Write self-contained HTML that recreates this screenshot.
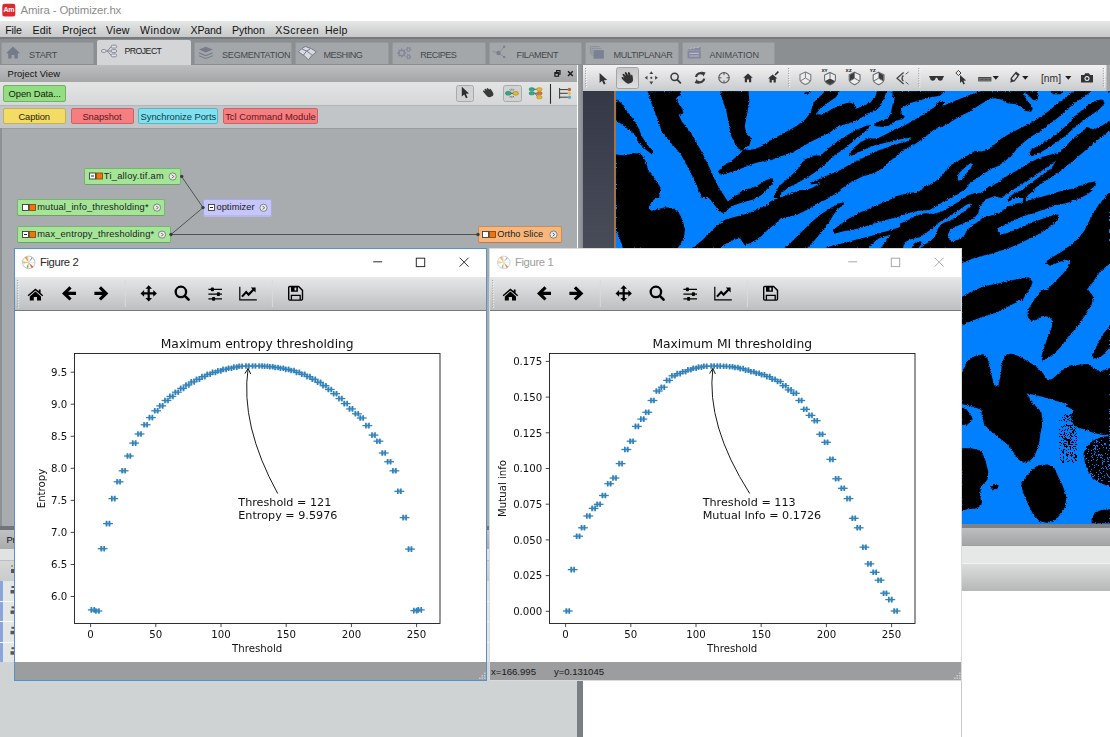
<!DOCTYPE html>
<html lang="en">
<head>
<meta charset="utf-8">
<title>Amira - Optimizer.hx</title>
<style>
html,body{margin:0;padding:0;background:#fff;}
body{width:1110px;height:737px;overflow:hidden;position:relative;font-family:"Liberation Sans",sans-serif;font-size:10px;color:#000;}
.a{position:absolute;}
.t{position:absolute;white-space:pre;line-height:1;}
#titlebar{left:0;top:0;width:1110px;height:21px;background:#fff;}
#menubar{left:0;top:21px;width:1110px;height:15.5px;background:linear-gradient(#e6e7e7,#c6c8c9);}
#menubar span{position:absolute;top:3.7px;line-height:1;white-space:pre;color:#111;}
#tabbar{left:0;top:36.5px;width:1110px;height:28.5px;background:#8c8f92;border-top:2px solid #787b7e;box-sizing:border-box;}
.tab{position:absolute;top:42px;height:22px;background:#a4a7a9;border-radius:2px 2px 0 0;border:1px solid #96999c;border-bottom:none;box-sizing:border-box;}
.tab.on{top:40px;height:25px;background:#d3d5d6;border:none;}
.tab span{position:absolute;top:7.8px;line-height:1;color:#45484b;white-space:pre;}
.tab.on span{top:7.3px;color:#1a1a1a;}
/* project view */
#pvhead{left:0;top:65px;width:577px;height:17px;background:linear-gradient(#bcbec0,#a3a5a7);}
#pvtool{left:0;top:82px;width:577px;height:23px;background:linear-gradient(#e3e4e4,#d6d7d8);}
#pvbtn{left:0;top:105px;width:577px;height:23px;background:#c2c5c7;border-top:1px solid #b2b4b5;box-sizing:border-box;}
#pvcanvas{left:0;top:128px;width:577px;height:398px;background:#a9acae;border-top:1px solid #9a9d9f;box-sizing:border-box;}
.btn{position:absolute;border-radius:2px;box-sizing:border-box;}
.node{position:absolute;height:15px;border-radius:2px;box-sizing:border-box;font-size:9.5px;line-height:13px;white-space:pre;}
.nt{font-size:9.6px;color:#1c1c1c;}
#split{left:577.5px;top:65px;width:5.5px;height:672px;background:linear-gradient(90deg,#9fa2a4,#888b8e);}
/* viewer */
#vtool{left:583px;top:65px;width:527px;height:26px;background:linear-gradient(#f2f2f2,#c9cbcc);}
#vgut{left:583px;top:91px;width:32px;height:433px;background:linear-gradient(#353847,#6a6d76);}
#vimg{left:615px;top:91px;width:495px;height:433px;background:#0080ff;overflow:hidden;}
/* figure windows */
.fig{position:absolute;box-sizing:border-box;width:474px;height:433px;background:#fff;}
.fig .tb{position:absolute;left:0;top:28px;width:100%;height:34px;background:linear-gradient(#e6e7e8,#bdbfc0);border-bottom:1px solid #77797b;box-sizing:border-box;}
.fig .sb{position:absolute;left:0;top:413px;width:100%;height:18px;background:#9b9d9e;}
.fig .ttl{position:absolute;left:24.9px;top:7.8px;line-height:1;white-space:pre;}
.mk .v{stroke-width:1.6px;}
.mk .f{stroke:none;fill:#1f77b4;opacity:.45;}
svg text{font-family:"DejaVu Sans","Liberation Sans",sans-serif;}
</style>
</head>
<body>
<!-- ===== title bar ===== -->
<div class="a" id="titlebar">
  <svg class="a" style="left:2px;top:3px" width="15" height="15" viewBox="0 0 15 15"><rect x="0.3" y="0.7" width="13" height="12.7" rx="2.2" fill="#e0272e"/><text x="6.8" y="9.4" font-size="7" letter-spacing="-0.4" font-weight="bold" fill="#fff" text-anchor="middle" style="font-family:'Liberation Sans',sans-serif">Am</text></svg>
  <span class="t" style="left:20.5px;top:5px;font-size:11.4px;letter-spacing:-0.124px;color:#8c8c8c;">Amira - Optimizer.hx</span>
</div>
<!-- ===== menu bar ===== -->
<div class="a" id="menubar">
  <span style="left:5.3px;font-size:10.6px;letter-spacing:-0.170px;">File</span><span style="left:32.4px;font-size:10.6px;letter-spacing:0.184px;">Edit</span><span style="left:62.2px;font-size:10.6px;letter-spacing:0.117px;">Project</span><span style="left:106px;font-size:10.6px;letter-spacing:0.230px;">View</span><span style="left:140px;font-size:10.6px;letter-spacing:0.469px;">Window</span><span style="left:190.5px;font-size:10.6px;letter-spacing:-0.142px;">XPand</span><span style="left:231.9px;font-size:10.6px;letter-spacing:0.003px;">Python</span><span style="left:275.3px;font-size:10.6px;letter-spacing:0.437px;">XScreen</span><span style="left:324.9px;font-size:10.6px;letter-spacing:0.226px;">Help</span>
</div>
<!-- ===== tab bar ===== -->
<div class="a" id="tabbar"></div>
<div class="tab" style="left:1px;width:93px"><span style="left:27.1px;font-size:9.1px;letter-spacing:-0.174px;">START</span></div>
<div class="tab on" style="left:97px;width:94px"><span style="left:27.6px;font-size:8.7px;letter-spacing:-0.535px;">PROJECT</span></div>
<div class="tab" style="left:194px;width:98px"><span style="left:27.0px;font-size:9.1px;letter-spacing:-0.251px;">SEGMENTATION</span></div>
<div class="tab" style="left:295px;width:94px"><span style="left:27.4px;font-size:9.1px;letter-spacing:-0.493px;">MESHING</span></div>
<div class="tab" style="left:392px;width:94px"><span style="left:27.3px;font-size:9.1px;letter-spacing:-0.548px;">RECIPES</span></div>
<div class="tab" style="left:489px;width:93px"><span style="left:26.6px;font-size:9.1px;letter-spacing:-0.446px;">FILAMENT</span></div>
<div class="tab" style="left:585px;width:94px"><span style="left:27.5px;font-size:9.1px;letter-spacing:-0.373px;">MULTIPLANAR</span></div>
<div class="tab" style="left:682px;width:93px"><span style="left:26.5px;font-size:9.1px;letter-spacing:-0.040px;">ANIMATION</span></div>
<svg class="a" style="left:0;top:38px" width="1110" height="28" viewBox="0 38 1110 28">
<!-- START home -->
<path d="M13 46.6L6 53.2H8.2V58.6H11.6V55H14.4V58.6H17.8V53.2H20Z" fill="#74798b"/>
<!-- PROJECT graph -->
<g fill="#e3e4e8" stroke="#7e828e" stroke-width="0.9"><rect x="101.5" y="49.6" width="4.6" height="2.8" rx="1.3"/><rect x="111.2" y="45.2" width="5.4" height="2.8" rx="1.3"/><rect x="111.2" y="49.6" width="5.4" height="2.8" rx="1.3"/><rect x="111.2" y="54" width="5.4" height="2.8" rx="1.3"/></g>
<path d="M106.2 51H111M107.3 51L111 46.8M107.3 51L111 55.3" fill="none" stroke="#7e828e" stroke-width="0.9"/>
<!-- SEGMENTATION layers -->
<path d="M205.8 46.8L212.8 49.6L205.8 52.4L198.8 49.6Z" fill="#777b8c"/>
<path d="M198.8 52.2L205.8 55L212.8 52.2L212.8 53.4L205.8 56.2L198.8 53.4Z" fill="#777b8c"/>
<path d="M198.8 55.2L205.8 58L212.8 55.2L212.8 56.2L205.8 59L198.8 56.2Z" fill="#777b8c"/>
<!-- MESHING -->
<path d="M298.4 51.9Q301.5 48 305.3 46.5Q311.5 47.8 316.4 51.9Q311.5 55.2 308.4 59.8Q304.5 55.2 298.4 51.9Z" fill="#d9dbe1" stroke="#767a8a" stroke-width="1"/>
<path d="M301.6 48.9Q307 50.2 312.6 55.6M310.6 48.6Q305.6 51 303.4 55.2" fill="none" stroke="#767a8a" stroke-width="1"/>
<!-- RECIPES gears -->
<path d="M406.28 52.55 L406.28 53.45 L405.05 54.02 L404.79 54.65 L405.26 55.92 L404.62 56.56 L403.35 56.09 L402.72 56.35 L402.15 57.58 L401.25 57.58 L400.68 56.35 L400.05 56.09 L398.78 56.56 L398.14 55.92 L398.61 54.65 L398.35 54.02 L397.12 53.45 L397.12 52.55 L398.35 51.98 L398.61 51.35 L398.14 50.08 L398.78 49.44 L400.05 49.91 L400.68 49.65 L401.25 48.42 L402.15 48.42 L402.72 49.65 L403.35 49.91 L404.62 49.44 L405.26 50.08 L404.79 51.35 L405.05 51.98Z M403.60 53.00A1.9 1.9 0 1 0 399.80 53.00A1.9 1.9 0 1 0 403.60 53.00Z M411.38 49.03 L411.38 49.77 L410.45 50.17 L410.19 50.62 L410.30 51.62 L409.67 51.99 L408.86 51.38 L408.34 51.38 L407.53 51.99 L406.90 51.62 L407.01 50.62 L406.75 50.17 L405.82 49.77 L405.82 49.03 L406.75 48.63 L407.01 48.18 L406.90 47.18 L407.53 46.81 L408.34 47.42 L408.86 47.42 L409.67 46.81 L410.30 47.18 L410.19 48.18 L410.45 48.63Z M409.60 49.40A1.0 1.0 0 1 0 407.60 49.40A1.0 1.0 0 1 0 409.60 49.40Z M411.38 56.33 L411.38 57.07 L410.45 57.47 L410.19 57.92 L410.30 58.92 L409.67 59.29 L408.86 58.68 L408.34 58.68 L407.53 59.29 L406.90 58.92 L407.01 57.92 L406.75 57.47 L405.82 57.07 L405.82 56.33 L406.75 55.93 L407.01 55.48 L406.90 54.48 L407.53 54.11 L408.34 54.72 L408.86 54.72 L409.67 54.11 L410.30 54.48 L410.19 55.48 L410.45 55.93Z M409.60 56.70A1.0 1.0 0 1 0 407.60 56.70A1.0 1.0 0 1 0 409.60 56.70Z" fill="#848899" fill-rule="evenodd"/>
<!-- FILAMENT -->
<path d="M492.7 51.4L498.5 53L504.2 46.8M498.5 53L504.2 57" fill="none" stroke="#868a97" stroke-width="0.9"/>
<circle cx="498.5" cy="53" r="2.2" fill="#7b7f91"/><circle cx="504.2" cy="46.8" r="1.2" fill="#7b7f91"/><circle cx="504.2" cy="57" r="1.2" fill="#7b7f91"/>
<!-- MULTIPLANAR -->
<path d="M590.4 54V46.5H599.4M592 56V48.4H601.4" fill="none" stroke="#8a8e9a" stroke-width="0.9"/>
<rect x="593.5" y="50.1" width="10.3" height="8.6" fill="#7b8093"/>
<!-- ANIMATION clapper -->
<path d="M687.6 49.6L700.8 47.2V50.6H687.6Z" fill="#8387a0"/>
<path d="M690.2 49.2L691.8 47.6M693.6 48.6L695.2 47.2M697 48L698.6 46.6" stroke="#c4c6d0" stroke-width="1" fill="none"/>
<rect x="687.6" y="51" width="13.2" height="7.5" fill="#8387a0"/>
<path d="M689.4 53.4H699M689.4 56H699" stroke="#b9bcc8" stroke-width="1.1"/>
</svg>
<!-- ===== project view ===== -->
<div class="a" id="pvhead"><span class="t" style="left:7.6px;top:4.4px;font-size:9.4px;letter-spacing:0.039px;color:#111;">Project View</span></div>
<div class="a" id="pvtool"></div>
<div class="a" id="pvbtn"></div>
<div class="a" id="pvcanvas"></div>
<div class="a" style="left:0;top:128px;width:1.5px;height:398px;background:#8e9194;"></div>
<div class="btn" style="left:3.2px;top:85.1px;width:62.5px;height:17.1px;background:#93dd83;border:1px solid #72b066;color:#12210f;"><span class="t" style="left:4.4px;top:3.2px;font-size:9.4px;letter-spacing:-0.080px;">Open Data...</span></div>
<div class="btn" style="left:3.2px;top:108.4px;width:62.5px;height:16.0px;background:#f3dc66;border:1px solid #c2b05a;color:#2a2508;"><span class="t" style="left:14.2px;top:2.3px;font-size:9.4px;letter-spacing:-0.104px;">Caption</span></div>
<div class="btn" style="left:70.8px;top:108.4px;width:63.0px;height:16.0px;background:#f67d80;border:1px solid #c4676a;color:#5c1719;"><span class="t" style="left:10.6px;top:2.3px;font-size:9.4px;letter-spacing:-0.053px;">Snapshot</span></div>
<div class="btn" style="left:137.8px;top:108.4px;width:80.0px;height:16.0px;background:#80e1f0;border:1px solid #62b3c2;color:#0d3c46;"><span class="t" style="left:1.7px;top:2.3px;font-size:9.4px;letter-spacing:-0.022px;">Synchronize Ports</span></div>
<div class="btn" style="left:222.6px;top:108.4px;width:95.2px;height:16.0px;background:#f67d80;border:1px solid #c4676a;color:#5c1719;"><span class="t" style="left:1.6px;top:2.3px;font-size:9.4px;letter-spacing:-0.004px;">Tcl Command Module</span></div>
<div class="a" style="left:456px;top:84.8px;width:18px;height:17.6px;background:#d1d2d3;border:1px solid #a8aaac;border-radius:2.5px;box-sizing:border-box;"></div>
<div class="a" style="left:503px;top:84.8px;width:18.6px;height:17.6px;background:#d1d2d3;border:1px solid #a8aaac;border-radius:2.5px;box-sizing:border-box;"></div>
<svg class="a" style="left:450px;top:64px" width="128" height="44" viewBox="450 64 128 44">
<!-- float / close -->
<g fill="none" stroke="#1c1c1c" stroke-width="1.2"><path d="M556.6 71.9V70.6H560V74.2H558.6"/><rect x="554.9" y="72.6" width="3.6" height="3.6"/><path d="M554.9 73.1H558.5" stroke-width="1.6"/></g>
<path d="M568 71.2L572.8 76M572.8 71.2L568 76" stroke="#1c1c1c" stroke-width="1.5" fill="none"/>
<!-- arrow cursor -->
<path d="M461.8 86.8V96.6L464.2 94.4L466 98.2L467.6 97.4L465.9 93.8L469 93.6Z" fill="#2e2e2e"/>
<!-- hand -->
<path transform="rotate(-20 488.5 93)" d="M484 90.4Q483.4 89 484.6 88.9Q485.6 89 486.4 90.6L485.8 88.6Q486 87.6 487 88Q487.8 88.4 488.4 90L488.2 88.4Q488.6 87.6 489.5 88.2Q490.2 89 490.6 90.6L490.8 89.6Q491.6 89.2 492 90.2Q492.8 92.6 492.9 95Q492.8 96.6 491.4 97.2L488.2 97.4Q486.8 97 486 95.6Q485 93 484 90.4Z" fill="#3a3a3a"/>
<!-- link icon -->
<path d="M509 93.3H516" stroke="#444" stroke-width="1"/>
<rect x="505.6" y="91.6" width="5.4" height="3.4" rx="1.7" fill="#2fae86" stroke="#1f7d5f" stroke-width="0.7"/>
<rect x="513" y="91.6" width="5.4" height="3.4" rx="1.7" fill="#e2bd2c" stroke="#a88a1c" stroke-width="0.7"/>
<path d="M511.9 88.6V90.6M511.9 96V98M509.8 89.2L510.6 90.6M514 89.2L513.2 90.6M509.8 97.4L510.6 96M514 97.4L513.2 96" stroke="#555" stroke-width="0.7"/>
<!-- tree icon -->
<path d="M533 89.3H538M533 93.3H538M535 93.3L538 97.2" stroke="#555" stroke-width="0.9" fill="none"/>
<rect x="529.2" y="87.8" width="5.2" height="3" rx="1.5" fill="#2fae86" stroke="#1f7d5f" stroke-width="0.6"/>
<rect x="529.2" y="91.8" width="5.2" height="3" rx="1.5" fill="#2fae86" stroke="#1f7d5f" stroke-width="0.6"/>
<rect x="536.8" y="87.8" width="5.2" height="3" rx="1.5" fill="#e2bd2c" stroke="#a88a1c" stroke-width="0.6"/>
<rect x="536.8" y="91.8" width="5.2" height="3" rx="1.5" fill="#d9772b" stroke="#a0551c" stroke-width="0.6"/>
<rect x="536.8" y="95.8" width="5.2" height="3" rx="1.5" fill="#e2bd2c" stroke="#a88a1c" stroke-width="0.6"/>
<!-- separator -->
<path d="M550.5 83.9V103.8" stroke="#2a2a2a" stroke-width="1.1"/>
<!-- list icon -->
<path d="M559.6 88V98.6M559.6 89.6H568M559.6 93.3H568M559.6 97.2H568" stroke="#3a3a3a" stroke-width="1" fill="none"/>
<circle cx="569.4" cy="89.5" r="1.7" fill="#b9683a"/><circle cx="569.4" cy="93.3" r="1.7" fill="#d9c262"/><circle cx="569.4" cy="97.2" r="1.7" fill="#6aa2c4"/>
</svg>

<svg class="a" style="left:0;top:128px" width="577" height="398" viewBox="0 128 577 398">
<g stroke="#505356" stroke-width="1" fill="none"><path d="M181.5 176.4L203 207.6M171 234.5L203 207.6M171 234.5H478"/></g>
</svg>
<div class="node" style="left:84px;top:168px;width:97px;height:17px;background:#a5e598;border:1px solid #79b36f;border-bottom-color:#6aa361;"><span class="t nt" style="left:18.8px;top:3.1px;font-size:9.3px;letter-spacing:0.253px;">Ti_alloy.tif.am</span></div>
<div class="node" style="left:17px;top:199px;width:148px;height:17px;background:#a5e598;border:1px solid #79b36f;border-bottom-color:#6aa361;"><span class="t nt" style="left:19.2px;top:3.1px;font-size:9.3px;letter-spacing:0.159px;">mutual_info_thresholding*</span></div>
<div class="node" style="left:17px;top:226px;width:154px;height:17px;background:#a5e598;border:1px solid #79b36f;border-bottom-color:#6aa361;"><span class="t nt" style="left:19.2px;top:3.1px;font-size:9.3px;letter-spacing:0.156px;">max_entropy_thresholding*</span></div>
<div class="node" style="left:203px;top:199px;width:69px;height:18px;background:#c6c6fb;border:1px solid #a9a9e0;border-bottom:2px solid #b8b8ee;"><span class="t nt" style="left:12.4px;top:3.1px;font-size:9.3px;letter-spacing:0.065px;">optimizer</span></div>
<div class="node" style="left:478px;top:226px;width:84px;height:17px;background:#f7b77c;border:1px solid #c98d55;border-bottom-color:#b57d49;"><span class="t nt" style="left:18.3px;top:3.1px;font-size:9.3px;letter-spacing:-0.009px;">Ortho Slice</span></div>
<svg class="a" style="left:0;top:160px" width="577" height="90" viewBox="0 160 577 90">
<g fill="#fff" stroke="#3c3c3c" stroke-width="0.9">
<rect x="89.5" y="173" width="6" height="6"/><rect x="22.5" y="204.5" width="6" height="6"/><rect x="22.5" y="231.5" width="6" height="6"/><rect x="208.5" y="204.5" width="6" height="6"/><rect x="482.5" y="231.5" width="6" height="6"/>
</g>
<g fill="#ee7411" stroke="#8a4a12" stroke-width="0.9">
<rect x="96.5" y="173" width="6" height="6"/><rect x="29.5" y="204.5" width="6" height="6"/><rect x="29.5" y="231.5" width="6" height="6"/><rect x="489.5" y="231.5" width="6" height="6"/>
</g>
<g stroke="#222" stroke-width="1"><path d="M91 176h3M24 234.5h3M210 207.5h3"/></g>
<g fill="#3a3d40"><circle cx="181.7" cy="176.4" r="1.7"/><circle cx="203" cy="207.6" r="1.7"/><circle cx="171" cy="234.5" r="1.7"/><circle cx="478" cy="234.5" r="1.7"/></g>
<g fill="#e9ece6" stroke="#6b6e6b" stroke-width="0.8">
<circle cx="172.7" cy="176.5" r="3.6"/><circle cx="157" cy="207.6" r="3.6"/><circle cx="162" cy="234.6" r="3.6"/><circle cx="263.5" cy="207.8" r="3.6"/><circle cx="553.5" cy="234.6" r="3.6"/>
</g>
<g fill="none" stroke="#444" stroke-width="0.9"><path d="M172 174.8l1.7 1.7l-1.7 1.7M156.3 205.9l1.7 1.7l-1.7 1.7M161.3 232.9l1.7 1.7l-1.7 1.7M262.8 206.1l1.7 1.7l-1.7 1.7M552.8 232.9l1.7 1.7l-1.7 1.7"/></g>
</svg>

<!-- ===== bottom-left (properties peek) ===== -->
<div class="a" style="left:0;top:526px;width:577px;height:3.5px;background:#727578;"></div>
<div class="a" style="left:0;top:529.5px;width:577px;height:19px;background:linear-gradient(#bfc1c3,#a9abad);"><span class="t" style="left:6.6px;top:5px;font-size:9.4px;letter-spacing:-0.3px;color:#111;">Properties</span></div>
<div class="a" style="left:0;top:548.5px;width:577px;height:11.5px;background:#e1e2e2;"></div>
<div class="a" style="left:0;top:560px;width:577px;height:21px;background:linear-gradient(#d5d7d7,#cacccc);border-top:1px solid #bcbebe;box-sizing:border-box;"></div>
<div class="a" style="left:0;top:581px;width:577px;height:81px;background:#e4e5e5;"></div>
<div class="a" style="left:0;top:581px;width:2.5px;height:81px;background:#8aa6da;"></div>
<div class="a" style="left:0;top:600.8px;width:577px;height:1px;background:#fafafa;"></div>
<div class="a" style="left:0;top:621.2px;width:577px;height:1px;background:#fafafa;"></div>
<div class="a" style="left:0;top:641.6px;width:577px;height:1px;background:#fafafa;"></div>
<div class="a" style="left:0;top:662px;width:577px;height:75px;background:#d0d3d4;"></div>
<svg class="a" style="left:8px;top:560px" width="8" height="100" viewBox="0 0 8 100"><g fill="#555"><rect x="3" y="5" width="2" height="2" fill="#b5a23a"/><rect x="3" y="9" width="3" height="4"/><rect x="3.5" y="26" width="2.5" height="2"/><rect x="2.5" y="30" width="3.5" height="3.5"/><rect x="3.5" y="46.4" width="2.5" height="2"/><rect x="2.5" y="50.4" width="3.5" height="3.5"/><rect x="3.5" y="66.8" width="2.5" height="2"/><rect x="2.5" y="70.8" width="3.5" height="3.5"/><rect x="3.5" y="87.2" width="2.5" height="2"/><rect x="2.5" y="91.2" width="3.5" height="3.5"/></g></svg>

<!-- ===== splitter ===== -->
<div class="a" id="split"></div>
<div class="a" style="left:577.3px;top:681px;width:5.3px;height:56px;background:#7b7e83;"></div>
<!-- ===== viewer ===== -->
<div class="a" id="vtool"></div>
<div class="a" style="left:616.4px;top:67.3px;width:22.2px;height:22px;background:linear-gradient(#c6c7c8,#dedede);border:1px solid #a2a4a6;border-radius:2.5px;box-sizing:border-box;"></div>
<svg class="a" style="left:583px;top:64px" width="527" height="28" viewBox="583 64 527 28">
<!-- grip dots -->
<g stroke-dasharray="1 1.5" stroke-width="1.2" fill="none"><path d="M585.6 68V88" stroke="#9a9c9e"/><path d="M586.6 68.8V88.8" stroke="#fff"/><path d="M788.6 68V88" stroke="#9a9c9e"/><path d="M789.6 68.8V88.8" stroke="#fff"/><path d="M918.8 68V88" stroke="#9a9c9e"/><path d="M919.8 68.8V88.8" stroke="#fff"/><path d="M1103.4 68V88" stroke="#9a9c9e"/><path d="M1104.4 68.8V88.8" stroke="#fff"/></g>
<rect x="1106.5" y="65" width="3.5" height="26" fill="#a3a5a7"/>
<!-- arrow -->
<path d="M599.6 73V83L602 80.8L603.8 84.6L605.6 83.8L603.9 80.2L607.2 80Z" fill="#333"/>
<!-- hand (tilted) -->
<g transform="rotate(-22 627 77.5)"><path d="M622 77Q621.2 75.4 622.4 75.2Q623.6 75.2 624.4 77L623.8 73.4Q624 72.2 625.2 72.6Q626 73 626.4 76L626.6 72.4Q627.2 71.4 628.2 72.2Q628.8 73 628.9 76.2L629.6 73.4Q630.4 72.6 631.2 73.6Q631.6 75 631.3 77.4L632 76.6Q633 76.4 632.8 77.8Q632.4 80.6 631.4 82.6Q630.6 83.8 629 84L626 83.8Q624.6 83.2 623.8 81.4Q622.8 79 622 77Z" fill="#333"/></g>
<!-- move -->
<g fill="#444"><path d="M651.3 71.2L653.3 74H649.3ZM651.3 84.4L653.3 81.6H649.3ZM644.7 77.8L647.5 75.8V79.8ZM657.9 77.8L655.1 75.8V79.8Z"/><circle cx="651.3" cy="77.8" r="1.1"/></g>
<!-- magnifier -->
<circle cx="674.6" cy="76.8" r="3.6" fill="none" stroke="#3a3a3a" stroke-width="1.5"/><path d="M677.2 79.6L680.4 82.8" stroke="#3a3a3a" stroke-width="1.8" stroke-linecap="round"/>
<!-- rotate -->
<g fill="none" stroke="#3a3a3a" stroke-width="2.2"><path d="M696 77A4.3 4.3 0 0 1 703 74.2"/><path d="M704.2 78.6A4.3 4.3 0 0 1 697.2 81.4"/></g>
<path d="M701.2 71.6L705.6 72.6L703.4 76.6ZM699 84L694.6 83L696.8 79Z" fill="#3a3a3a"/>
<!-- crosshair -->
<circle cx="724" cy="77.8" r="5.2" fill="none" stroke="#555" stroke-width="1.1"/><path d="M724 72.6V75.2M724 80.4V83M718.8 77.8H721.4M726.6 77.8H729.2" stroke="#555" stroke-width="1"/>
<!-- home -->
<path d="M748 73.4L743.2 77.8H744.8V82.2H747V79.4H749V82.2H751.2V77.8H752.8Z" fill="#333"/>
<!-- home2 -->
<path d="M772.6 74.4L768 78.6H769.6V82.6H771.8V80H773.6V82.6H775.8V78.6H777.4Z" fill="#333"/><path d="M775 75L778.4 71.6" stroke="#333" stroke-width="1.6"/>
<!-- cubes -->
<g transform="translate(805.4 78.2)"><path d="M0 -6.2L5.4 -3.6V1.6Q5 4 0 6.4Q-5 4 -5.4 1.6V-3.6Z" fill="#eceded" stroke="#7a7c7e" stroke-width="1.1"/><path d="M0 -6V-0.2M0 -0.2L-4.8 2.6M0 -0.2L4.8 2.6" stroke="#7a7c7e" stroke-width="1" fill="none"/></g>
<g transform="translate(830 78.6)"><path d="M0 -6.2L5.4 -3.6V1.6Q5 4 0 6.4Q-5 4 -5.4 1.6V-3.6Z" fill="#eceded" stroke="#6a6c6e" stroke-width="1.1"/><path d="M-4.8 2.4L0 -0.2L4.8 2.4Q4 4.4 0 6Q-4 4.4 -4.8 2.4Z" fill="#3c3c3c"/><path d="M0 -0.2V-5.6" stroke="#6a6c6e" stroke-width="1"/></g>
<g transform="translate(854.6 78.4)"><path d="M0 -6.2L5.4 -3.6V1.6Q5 4 0 6.4Q-5 4 -5.4 1.6V-3.6Z" fill="#eceded" stroke="#6a6c6e" stroke-width="1.1"/><path d="M-4.9 -3.4L0 -5.8V-0.2L-4.9 2.4Z" fill="#3c3c3c"/><path d="M0 -0.2L4.8 2.6M0 -0.2L-4.8 2.6" stroke="#6a6c6e" stroke-width="1" fill="none"/></g>
<g transform="translate(878.6 78.4)"><path d="M0 -6.2L5.4 -3.6V1.6Q5 4 0 6.4Q-5 4 -5.4 1.6V-3.6Z" fill="#eceded" stroke="#6a6c6e" stroke-width="1.1"/><path d="M4.9 -3.4L0 -5.8V-0.2L4.9 2.4Z" fill="#3c3c3c"/><path d="M0 -0.2L4.8 2.6M0 -0.2L-4.8 2.6" stroke="#6a6c6e" stroke-width="1" fill="none"/></g>
<g font-size="4.2" font-weight="bold" fill="#333" style="font-family:'Liberation Sans',sans-serif"><text x="821.4" y="72">XY</text><text x="845.6" y="72">XZ</text><text x="869.8" y="72">YZ</text></g>
<!-- eye / view all -->
<path d="M903.6 72.4L897 78.2L903.6 84" fill="none" stroke="#444" stroke-width="1.3"/><path d="M903.4 75.4Q900.6 78.2 903.4 81" fill="none" stroke="#444" stroke-width="1.4"/><path d="M905.6 74.2L908.6 72M905.6 82L908.6 84.4" stroke="#555" stroke-width="0.9"/>
<!-- glasses -->
<path d="M929.2 76H943.8V77.2L943 77.4Q942.8 80.6 940 80.8Q937.6 80.6 937.2 77.8H935.8Q935.4 80.6 933 80.8Q930.2 80.6 930 77.4L929.2 77.2Z" fill="#333"/>
<!-- pointer with diamond -->
<path d="M958.4 70.4L961 73L958.4 75.6L955.8 73Z" fill="none" stroke="#444" stroke-width="1"/><path d="M960 75V83L961.9 81.3L963.4 84.4L964.9 83.7L963.5 80.7L966.2 80.5Z" fill="#333"/>
<!-- ruler -->
<rect x="978.2" y="77" width="13.2" height="4.4" fill="#4a4a4a"/><path d="M980 78.2V79.6M982 78.2V79.2M984 78.2V79.6M986 78.2V79.2M988 78.2V79.6M990 78.2V79.2" stroke="#d0d0d0" stroke-width="0.7"/><path d="M978.8 80.8H990.8" stroke="#9a9a9a" stroke-width="0.6"/>
<path d="M992.7 75.9h6.2l-3.1 3.8z" fill="#1e1e1e"/>
<!-- pen -->
<g transform="rotate(38 1014.2 77.8)"><rect x="1012.3" y="73.4" width="3.8" height="7.4" rx="1" fill="none" stroke="#333" stroke-width="1.3"/><path d="M1012.3 80.8L1014.2 84L1016.1 80.8" fill="#333"/><path d="M1011.8 72.6H1016.6" stroke="#333" stroke-width="1.6"/></g>
<path d="M1022.2 75.9h6.2l-3.1 3.8z" fill="#1e1e1e"/>
<text x="1041" y="82.2" font-size="10.2" fill="#2e2e2e" textLength="20" lengthAdjust="spacingAndGlyphs" style="font-family:'Liberation Sans',sans-serif">[nm]</text>
<path d="M1065.2 75.9h6.2l-3.1 3.8z" fill="#1e1e1e"/>
<!-- camera -->
<path d="M1081 75H1084.2L1085.2 73.2H1089L1090 75H1093V82.4H1081Z" fill="#333"/><circle cx="1087" cy="78.6" r="2.5" fill="#ececec"/><circle cx="1087" cy="78.6" r="1.4" fill="#333"/>
</svg>

<div class="a" id="vgut"></div>
<div class="a" id="vimg">
<svg class="a" style="left:0;top:0" width="495" height="433" viewBox="615 91 495 433">
<defs><filter id="rough" x="0" y="0" width="100%" height="100%"><feTurbulence type="fractalNoise" baseFrequency="0.75" numOctaves="2" seed="3" result="n"/><feDisplacementMap in="SourceGraphic" in2="n" scale="3.2" xChannelSelector="R" yChannelSelector="G"/></filter></defs>
<rect x="615" y="91" width="495" height="433" fill="#0080ff"/>
<g fill="#000" filter="url(#rough)">
<g transform="translate(610,88) scale(0.15314)">
<polygon points="40,75 75,100 110,150 150,200 185,260 210,320 245,370 285,425 275,435 230,400 190,360 160,300 120,270 80,240 40,210"/>
<polygon points="40,435 100,440 150,425 200,430 230,470 250,540 290,590 330,650 320,718 40,718"/>
<polygon points="245,22 460,22 465,45 430,60 445,100 470,130 480,165 450,180 470,220 520,280 560,350 600,420 640,500 680,590 715,660 740,718 600,718 560,620 510,520 460,430 400,360 340,290 310,200 270,100"/>
<polygon points="720,22 905,22 910,90 895,170 880,250 890,300 925,330 910,370 870,400 850,410 820,370 790,310 775,230 760,150 735,80"/>
<polygon points="1110,310 1040,350 980,385 920,405 870,400 850,430 800,470 740,510 705,545 720,565 790,550 870,520 950,490 1030,470 1110,440"/>
<polygon points="1060,590 1020,600 960,640 900,660 840,690 800,718 960,718 1010,680 1050,630 1070,600"/>
<polygon points="1110,630 1085,680 1075,718 1110,718"/>
</g>
<g transform="translate(770,88) scale(0.15314)">
<polygon points="0,345 80,300 170,250 230,205 265,160 285,95 340,40 360,22 455,22 430,60 380,95 330,130 300,170 340,175 400,140 460,110 520,95 550,105 565,135 610,115 660,90 690,50 700,22 760,22 745,70 720,120 680,150 620,180 560,215 500,235 440,255 390,290 330,320 270,350 200,390 140,425 70,445 0,475"/>
<polygon points="800,22 1143,22 1110,50 1050,60 980,80 910,100 860,130 850,165 880,185 870,200 820,215 790,240 740,255 690,250 680,235 720,215 770,200 790,160 800,110 815,70 800,50"/>
<polygon points="25,700 60,640 130,580 190,520 220,470 280,440 330,440 380,395 440,350 500,310 560,275 620,250 660,240 640,270 590,310 540,350 480,400 420,440 370,490 310,540 250,580 180,620 120,650 70,690 50,718 25,718"/>
<polygon points="1110,100 1050,140 990,180 930,215 870,250 810,275 760,300 700,330 640,330 590,355 550,390 515,430 525,445 580,420 650,385 720,365 790,350 850,335 910,325 930,320 900,345 830,365 760,390 700,410 640,440 580,470 520,500 450,540 390,565 330,590 270,615 265,630 330,620 280,650 200,680 130,705 100,718 380,718 450,670 520,620 600,580 680,555 740,520 780,480 830,440 880,400 940,370 1000,330 1060,280 1110,250"/>
<polygon points="1110,590 1060,620 1000,660 940,680 860,695 790,718 1110,718"/>
<polygon points="0,590 20,600 15,630 0,635"/>
<polygon points="225,30 270,25 240,48"/>
</g>
<g transform="translate(940,88) scale(0.15314)">
<polygon points="0,125 60,100 120,75 180,50 240,30 270,22 640,22 640,75 610,80 590,60 570,40 545,30 560,70 585,100 605,130 595,155 560,150 520,115 490,105 440,100 400,75 350,65 310,80 260,110 200,150 140,180 80,215 30,245 0,258"/>
<polygon points="0,90 25,100 0,120"/>
<polygon points="720,22 800,22 790,40 740,40"/>
<path fill-rule="evenodd" d="M870,22 820,60 770,100 710,150 650,195 590,230 520,265 460,295 400,330 360,365 320,400 270,415 230,410 180,440 120,475 60,510 30,550 0,590 0,718 90,718 150,660 210,610 270,570 330,530 380,510 420,480 470,440 500,400 540,360 590,320 650,285 710,240 770,195 830,140 890,90 950,50 990,22Z M120,560 160,520 200,490 215,500 180,550 140,600 115,605Z"/>
<polygon points="1060,75 1075,100 1040,140 980,180 920,225 860,275 810,320 760,355 700,395 650,425 600,445 580,430 600,400 660,365 720,330 780,285 830,240 870,195 920,150 970,110 1020,80"/>
<polygon points="1110,215 1050,250 1000,270 960,255 930,285 880,320 830,370 780,420 700,440 640,460 580,490 520,530 460,560 400,600 340,640 280,670 200,700 170,718 400,718 440,690 500,650 560,610 620,570 680,530 740,490 760,470 730,520 680,560 620,600 570,640 520,680 470,705 500,718 560,718 590,680 650,630 720,590 790,540 850,490 910,440 970,390 1030,340 1080,300 1110,275"/>
<polygon points="1010,610 960,620 890,650 820,670 760,690 700,705 660,718 900,718 960,680 1000,650 1020,625"/>
<polygon points="1110,680 1085,700 1080,718 1110,718"/>
<polygon points="1095,22 1110,22 1110,35"/>
</g>
<g transform="translate(610,190) scale(0.15314)">
<polygon points="40,0 330,0 310,40 270,80 255,110 270,135 310,125 360,112 420,120 450,150 475,200 490,260 480,320 455,360 440,382 85,382 65,320 50,280 40,260"/>
<polygon points="600,0 720,0 770,75 830,30 870,0 1010,0 990,30 940,60 870,80 810,100 770,125 740,150 715,140 680,95 640,45"/>
<polygon points="1110,55 1060,80 1000,110 930,140 860,165 800,180 750,195 700,230 650,280 600,330 560,360 530,382 720,382 760,350 810,325 850,315 865,340 880,360 920,345 980,310 1030,260 1080,220 1110,180"/>
<polygon points="1075,30 1110,0 1110,40"/>
</g>
<g transform="translate(770,190) scale(0.15314)">
<polygon points="0,75 60,50 130,25 200,0 470,0 420,30 360,65 300,95 240,130 180,160 120,175 70,185 40,215 0,240"/>
<polygon points="485,80 440,90 390,120 330,160 270,210 210,270 150,330 90,382 240,382 290,330 340,270 380,220 410,170 440,125 480,100"/>
<polygon points="1110,0 990,0 930,20 860,40 790,60 720,90 650,120 580,150 510,190 450,230 410,265 420,285 480,270 540,260 600,245 660,225 720,205 780,190 840,175 900,165 960,150 1020,130 1070,110 1110,90"/>
<polygon points="1110,150 1060,160 1000,170 950,190 900,215 840,245 780,265 720,280 660,300 600,315 540,330 470,350 400,365 350,382 640,382 680,340 720,310 760,300 790,290 760,330 720,382 870,382 900,340 930,310 960,290 1000,270 1040,240 1080,215 1110,200"/>
<polygon points="940,350 980,335 990,350 960,375 930,380"/>
<polygon points="1050,382 1110,330 1110,382"/>
</g>
<g transform="translate(940,190) scale(0.15314)">
<polygon points="0,0 140,0 90,30 40,55 0,80"/>
<polygon points="0,125 70,95 140,60 200,30 225,35 190,70 120,110 60,150 0,185"/>
<polygon points="0,205 60,180 120,150 180,110 210,60 240,25 300,0 390,0 370,30 300,60 265,100 250,150 190,180 130,215 70,250 0,290"/>
<polygon points="560,0 620,0 560,40 560,75 620,55 700,35 780,10 810,0 1000,0 960,30 900,60 830,85 760,100 700,120 640,140 580,160 520,180 470,205 420,230 380,255 390,290 440,280 500,255 560,230 620,205 680,185 740,165 775,160 770,190 740,225 690,260 640,290 580,320 520,350 460,375 400,395 340,415 280,430 220,445 170,465 140,480 140,382 60,382 110,340 160,300 180,260 230,230 290,200 350,170 400,140 440,110 490,90 540,80 545,50 520,30 470,60 450,80 440,60 480,25 520,5"/>
<polygon points="0,300 60,320 30,350 0,345"/>
<polygon points="1110,20 1080,50 1040,90 1000,150 970,210 940,270 900,320 850,360 800,400 750,430 700,460 690,480 720,495 780,470 820,455 850,465 840,500 800,550 750,600 710,640 670,690 640,718 995,718 985,690 960,650 1000,600 1030,550 1060,520 1100,490 1110,480"/>
<polygon points="140,700 200,670 260,640 300,625 380,610 450,595 520,580 580,570 605,600 590,640 560,680 540,718 140,718"/>
</g>
<polygon points="920.3,214.5 940.2,205.1 955.4,198.1 976.5,191 981.1,195.7 967.1,205.1 948.4,214.5 929.6,223.8 920.3,226.2"/>
<polygon points="936,104 940,101.5 944,102 944,105 940,109 936,109.5"/>
<g transform="translate(900,186) scale(0.0901)">
<rect x="0" y="0" width="1110" height="694"/>
<g fill="#0080ff">
<polygon points="0,0 275,0 230,55 0,100"/>
<polygon points="0,330 100,300 200,275 330,265 420,210 520,155 620,100 700,50 760,0 990,0 960,30 900,75 800,85 720,120 640,180 560,230 470,280 380,310 280,300 180,330 80,385 0,415"/>
<polygon points="30,694 60,620 120,590 200,575 270,530 350,480 400,430 470,380 560,330 640,280 720,220 775,190 790,210 730,270 640,330 560,380 480,410 420,470 410,520 380,570 330,620 250,660 220,694"/>
<polygon points="530,540 560,480 640,440 740,400 830,350 870,300 880,240 950,150 1050,110 1110,130 1110,300 1000,330 920,350 860,400 790,450 740,490 720,540 660,590 570,620 545,590"/>
<polygon points="1080,470 1110,455 1110,520 1090,510"/>
</g>
<polygon points="130,694 150,640 200,610 240,620 235,650 200,694"/>
</g>
<g transform="translate(950,290) scale(0.16276)">
<polygon points="70,45 130,15 170,0 470,0 440,40 400,80 340,110 280,140 220,160 160,180 110,200 70,220"/>
<polygon points="560,0 850,0 880,40 870,90 840,140 800,200 760,250 720,300 680,350 640,390 600,420 570,435 560,410 580,350 600,290 625,230 630,190 610,165 570,160 530,185 500,190 475,165 480,120 510,70 540,30"/>
<polygon points="983,220 950,260 920,310 890,370 870,410 900,425 940,400 983,350"/>
<polygon points="70,520 100,450 140,410 200,395 230,420 250,500 270,580 295,595 310,530 320,450 340,400 380,390 430,410 480,440 530,470 570,510 600,555 630,545 680,500 730,465 790,460 850,455 880,480 920,500 983,480 983,737 750,737 720,700 680,690 620,670 540,650 470,635 500,680 530,737 200,737 130,715 70,700"/>
</g>
<g transform="translate(950,405) scale(0.16276)">
<polygon points="70,15 100,25 140,80 120,110 90,125 70,120"/>
<polygon points="190,0 520,0 560,40 570,100 555,180 545,250 520,310 490,345 450,355 420,335 390,290 350,240 300,200 250,160 210,120 195,60"/>
<polygon points="700,0 983,0 983,180 940,185 880,170 830,150 780,140 750,110 745,60 760,30"/>
<polygon points="983,190 940,195 880,215 840,250 820,300 830,360 850,410 880,450 920,480 983,500"/>
<polygon points="70,265 130,265 190,280 215,330 235,410 230,460 190,500 185,560 195,610 170,635 110,640 70,650"/>
<polygon points="250,500 275,485 300,495 290,515 260,525"/>
<polygon points="500,400 540,370 600,365 640,385 660,430 690,490 715,560 710,620 680,670 650,705 600,725 550,715 510,670 480,610 455,550 435,490 460,450"/>
<polygon points="983,640 930,645 890,660 870,700 870,727 983,727"/>
</g>
</g>
<path d="M1065 414h1v1h-1zM1070 414h1v1h-1zM1075 414h1v1h-1zM1076 414h1v1h-1zM1064 415h1v1h-1zM1066 415h1v1h-1zM1067 415h1v1h-1zM1069 415h1v1h-1zM1070 415h1v1h-1zM1066 416h1v1h-1zM1067 416h1v1h-1zM1068 416h1v1h-1zM1071 416h1v1h-1zM1062 417h1v1h-1zM1064 417h1v1h-1zM1067 417h1v1h-1zM1071 417h1v1h-1zM1072 417h1v1h-1zM1073 417h1v1h-1zM1075 417h1v1h-1zM1065 418h1v1h-1zM1069 418h1v1h-1zM1071 418h1v1h-1zM1063 419h1v1h-1zM1064 419h1v1h-1zM1067 419h1v1h-1zM1068 419h1v1h-1zM1059 420h1v1h-1zM1061 420h1v1h-1zM1064 420h1v1h-1zM1069 420h1v1h-1zM1071 420h1v1h-1zM1066 421h1v1h-1zM1073 421h1v1h-1zM1075 422h1v1h-1zM1066 424h1v1h-1zM1075 424h1v1h-1zM1076 424h1v1h-1zM1064 425h1v1h-1zM1066 425h1v1h-1zM1067 425h1v1h-1zM1068 425h1v1h-1zM1069 425h1v1h-1zM1070 425h1v1h-1zM1071 425h1v1h-1zM1072 425h1v1h-1zM1061 426h1v1h-1zM1063 426h1v1h-1zM1065 426h1v1h-1zM1068 426h1v1h-1zM1070 426h1v1h-1zM1062 427h1v1h-1zM1070 427h1v1h-1zM1071 427h1v1h-1zM1074 427h1v1h-1zM1068 428h1v1h-1zM1072 428h1v1h-1zM1075 428h1v1h-1zM1059 429h1v1h-1zM1065 429h1v1h-1zM1067 429h1v1h-1zM1070 429h1v1h-1zM1071 429h1v1h-1zM1072 429h1v1h-1zM1074 429h1v1h-1zM1062 430h1v1h-1zM1064 430h1v1h-1zM1067 430h1v1h-1zM1073 430h1v1h-1zM1074 430h1v1h-1zM1061 431h1v1h-1zM1072 431h1v1h-1zM1073 431h1v1h-1zM1075 431h1v1h-1zM1064 432h1v1h-1zM1069 432h1v1h-1zM1072 432h1v1h-1zM1073 432h1v1h-1zM1059 433h1v1h-1zM1064 433h1v1h-1zM1066 433h1v1h-1zM1070 433h1v1h-1zM1071 433h1v1h-1zM1073 433h1v1h-1zM1076 433h1v1h-1zM1060 434h1v1h-1zM1061 434h1v1h-1zM1063 434h1v1h-1zM1064 434h1v1h-1zM1068 434h1v1h-1zM1070 434h1v1h-1zM1075 434h1v1h-1zM1065 435h1v1h-1zM1067 435h1v1h-1zM1070 435h1v1h-1zM1071 435h1v1h-1zM1074 435h1v1h-1zM1059 436h1v1h-1zM1061 436h1v1h-1zM1062 436h1v1h-1zM1064 436h1v1h-1zM1069 436h1v1h-1zM1071 436h1v1h-1zM1072 436h1v1h-1zM1075 436h1v1h-1zM1076 436h1v1h-1zM1062 437h1v1h-1zM1065 437h1v1h-1zM1070 437h1v1h-1zM1063 438h1v1h-1zM1064 438h1v1h-1zM1065 438h1v1h-1zM1066 438h1v1h-1zM1070 438h1v1h-1zM1076 438h1v1h-1zM1064 439h1v1h-1zM1065 439h1v1h-1zM1066 439h1v1h-1zM1067 439h1v1h-1zM1068 439h1v1h-1zM1069 439h1v1h-1zM1071 439h1v1h-1zM1061 440h1v1h-1zM1063 440h1v1h-1zM1066 440h1v1h-1zM1067 440h1v1h-1zM1068 440h1v1h-1zM1069 440h1v1h-1zM1070 440h1v1h-1zM1074 440h1v1h-1zM1076 440h1v1h-1zM1068 441h1v1h-1zM1069 441h1v1h-1zM1072 441h1v1h-1zM1059 442h1v1h-1zM1060 442h1v1h-1zM1064 442h1v1h-1zM1065 442h1v1h-1zM1066 442h1v1h-1zM1068 442h1v1h-1zM1069 442h1v1h-1zM1071 442h1v1h-1zM1072 442h1v1h-1zM1073 442h1v1h-1zM1075 442h1v1h-1zM1061 443h1v1h-1zM1063 443h1v1h-1zM1068 443h1v1h-1zM1069 443h1v1h-1zM1063 444h1v1h-1zM1064 444h1v1h-1zM1065 444h1v1h-1zM1068 444h1v1h-1zM1069 444h1v1h-1zM1070 444h1v1h-1zM1071 444h1v1h-1zM1072 444h1v1h-1zM1075 444h1v1h-1zM1076 444h1v1h-1zM1060 445h1v1h-1zM1064 445h1v1h-1zM1066 445h1v1h-1zM1064 446h1v1h-1zM1065 446h1v1h-1zM1066 446h1v1h-1zM1067 446h1v1h-1zM1069 446h1v1h-1zM1070 446h1v1h-1zM1073 446h1v1h-1zM1074 446h1v1h-1zM1075 446h1v1h-1zM1066 447h1v1h-1zM1070 447h1v1h-1zM1072 447h1v1h-1zM1059 448h1v1h-1zM1070 448h1v1h-1zM1073 448h1v1h-1zM1075 448h1v1h-1zM1063 449h1v1h-1zM1064 449h1v1h-1zM1068 449h1v1h-1zM1070 449h1v1h-1zM1076 449h1v1h-1zM1061 450h1v1h-1zM1063 450h1v1h-1zM1066 450h1v1h-1zM1074 450h1v1h-1zM1062 451h1v1h-1zM1063 451h1v1h-1zM1062 452h1v1h-1zM1063 452h1v1h-1zM1068 452h1v1h-1zM1070 452h1v1h-1zM1072 452h1v1h-1zM1063 453h1v1h-1zM1066 453h1v1h-1zM1070 453h1v1h-1zM1072 453h1v1h-1zM1060 454h1v1h-1zM1066 454h1v1h-1zM1067 454h1v1h-1zM1068 454h1v1h-1zM1071 454h1v1h-1zM1074 454h1v1h-1zM1075 454h1v1h-1zM1066 455h1v1h-1zM1067 455h1v1h-1zM1070 455h1v1h-1zM1071 455h1v1h-1zM1072 455h1v1h-1zM1075 455h1v1h-1zM1076 455h1v1h-1zM1063 456h1v1h-1zM1067 456h1v1h-1zM1071 456h1v1h-1zM1075 456h1v1h-1zM1076 456h1v1h-1zM1060 457h1v1h-1zM1063 457h1v1h-1zM1073 457h1v1h-1zM1074 457h1v1h-1zM1075 457h1v1h-1zM1076 457h1v1h-1zM1063 458h1v1h-1zM1067 458h1v1h-1zM1074 458h1v1h-1zM1060 459h1v1h-1zM1066 459h1v1h-1zM1071 459h1v1h-1zM1075 459h1v1h-1zM1061 460h1v1h-1zM1063 460h1v1h-1zM1069 460h1v1h-1zM1072 460h1v1h-1zM1075 460h1v1h-1zM1076 460h1v1h-1zM1062 461h1v1h-1zM1063 461h1v1h-1zM1067 461h1v1h-1zM1068 461h1v1h-1zM1072 461h1v1h-1zM1062 462h1v1h-1zM1063 462h1v1h-1zM1073 462h1v1h-1z" fill="#000"/>
<path d="M1096 440h1v1h-1zM1101 440h1v1h-1zM1109 440h1v1h-1zM1096 441h1v1h-1zM1097 441h1v1h-1zM1088 442h1v1h-1zM1094 442h1v1h-1zM1096 442h1v1h-1zM1099 442h1v1h-1zM1089 443h1v1h-1zM1104 443h1v1h-1zM1105 443h1v1h-1zM1101 444h1v1h-1zM1104 444h1v1h-1zM1105 444h1v1h-1zM1109 444h1v1h-1zM1087 445h1v1h-1zM1093 445h1v1h-1zM1094 445h1v1h-1zM1096 445h1v1h-1zM1097 445h1v1h-1zM1102 445h1v1h-1zM1109 445h1v1h-1zM1095 446h1v1h-1zM1097 446h1v1h-1zM1095 447h1v1h-1zM1103 447h1v1h-1zM1106 447h1v1h-1zM1086 448h1v1h-1zM1094 448h1v1h-1zM1095 448h1v1h-1zM1099 448h1v1h-1zM1106 448h1v1h-1zM1109 448h1v1h-1zM1088 449h1v1h-1zM1093 449h1v1h-1zM1095 449h1v1h-1zM1097 449h1v1h-1zM1091 450h1v1h-1zM1108 450h1v1h-1zM1088 451h1v1h-1zM1094 451h1v1h-1zM1098 451h1v1h-1zM1095 452h1v1h-1zM1087 453h1v1h-1zM1091 453h1v1h-1zM1094 453h1v1h-1zM1105 453h1v1h-1zM1094 454h1v1h-1zM1098 454h1v1h-1zM1099 454h1v1h-1zM1101 454h1v1h-1zM1107 454h1v1h-1zM1092 455h1v1h-1zM1096 455h1v1h-1zM1098 455h1v1h-1zM1100 455h1v1h-1zM1102 455h1v1h-1zM1091 456h1v1h-1zM1092 457h1v1h-1zM1097 457h1v1h-1zM1100 457h1v1h-1zM1101 457h1v1h-1zM1107 457h1v1h-1zM1109 457h1v1h-1zM1086 458h1v1h-1zM1102 458h1v1h-1zM1107 458h1v1h-1zM1093 459h1v1h-1zM1097 459h1v1h-1zM1104 459h1v1h-1zM1108 459h1v1h-1zM1088 460h1v1h-1zM1091 460h1v1h-1zM1096 460h1v1h-1zM1102 460h1v1h-1zM1103 461h1v1h-1zM1104 461h1v1h-1zM1107 461h1v1h-1zM1108 461h1v1h-1zM1088 462h1v1h-1zM1102 462h1v1h-1zM1102 463h1v1h-1zM1092 464h1v1h-1zM1096 464h1v1h-1zM1102 464h1v1h-1zM1108 464h1v1h-1zM1109 464h1v1h-1zM1094 465h1v1h-1zM1098 465h1v1h-1zM1109 465h1v1h-1zM1089 466h1v1h-1zM1105 466h1v1h-1zM1108 466h1v1h-1zM1094 467h1v1h-1zM1102 467h1v1h-1zM1106 467h1v1h-1zM1101 468h1v1h-1zM1103 468h1v1h-1zM1106 468h1v1h-1zM1087 469h1v1h-1zM1091 469h1v1h-1zM1107 469h1v1h-1zM1099 470h1v1h-1zM1090 471h1v1h-1zM1103 471h1v1h-1zM1096 472h1v1h-1zM1100 472h1v1h-1zM1090 473h1v1h-1zM1091 473h1v1h-1zM1101 473h1v1h-1zM1106 473h1v1h-1zM1089 474h1v1h-1zM1092 474h1v1h-1zM1098 474h1v1h-1zM1107 474h1v1h-1zM1094 475h1v1h-1zM1104 475h1v1h-1zM1107 475h1v1h-1zM1092 476h1v1h-1zM1093 476h1v1h-1zM1098 476h1v1h-1zM1102 476h1v1h-1zM1108 476h1v1h-1zM1104 477h1v1h-1zM1109 477h1v1h-1zM1098 478h1v1h-1zM1100 478h1v1h-1zM1086 479h1v1h-1zM1087 479h1v1h-1zM1098 479h1v1h-1zM1097 480h1v1h-1zM1101 480h1v1h-1zM1102 480h1v1h-1zM1108 481h1v1h-1zM1109 481h1v1h-1z" fill="#0080ff"/>
</svg>

</div>
<div class="a" style="left:614.2px;top:91px;width:1.5px;height:433px;background:#a9713f;"></div>
<div class="a" style="left:583px;top:523.5px;width:527px;height:5px;background:#7f8284;"></div>
<div class="a" style="left:583px;top:528px;width:527px;height:17px;background:linear-gradient(#bdbfc0,#a2a4a5);"></div>
<div class="a" style="left:583px;top:545px;width:527px;height:18px;background:#e6e7e7;border-top:1px solid #9c9e9f;box-sizing:border-box;"></div>
<div class="a" style="left:583px;top:563px;width:527px;height:28px;background:linear-gradient(#dcdddd,#b6b8b8);border-top:1px solid #f2f2f2;box-sizing:border-box;"></div>
<div class="a" style="left:583px;top:591px;width:527px;height:146px;background:#fff;"></div>
<div class="a" style="left:961.3px;top:591px;width:1px;height:146px;background:#c9cacb;"></div>

<!-- ===== Figure 2 ===== -->
<div class="fig" style="left:14px;top:248px;width:473.4px;border:1px solid #4f93d2;">
  <div class="ttl" style="color:#2a2a2a;font-size:11.3px;letter-spacing:-0.369px;">Figure 2</div>
  <div class="tb"></div>
  <div class="sb"></div>
</div>
<!-- ===== Figure 1 ===== -->
<div class="fig" style="left:489px;top:248px;width:472.8px;border:1px solid #d9dadb;">
  <div class="ttl" style="color:#9e9e9e;font-size:11.3px;letter-spacing:-0.369px;">Figure 1</div>
  <div class="tb"></div>
  <div class="sb"><span class="t" style="left:1px;top:4.8px;font-size:9.6px;letter-spacing:-0.010px;color:#1a1a1a;">x=166.995</span><span class="t" style="left:64px;top:4.8px;font-size:9.6px;letter-spacing:-0.042px;color:#1a1a1a;">y=0.131045</span></div>
</div>
<svg class="a" style="left:0;top:248px" width="1110" height="66" viewBox="0 248 1110 66">
<g transform="translate(0 0)">
<!-- mpl logo -->
<g opacity="1"><circle cx="28.7" cy="262.4" r="6.3" fill="#fff" stroke="#b9bcc2" stroke-width="0.9"/>
<path d="M28.7 262.4L24.6 257.6L27.2 256.4Z" fill="#f0a12c"/><path d="M28.7 262.4L23 261L23.4 263.8Z" fill="#e8c53a"/><path d="M28.7 262.4L33.6 267L31.6 268Z" fill="#e2672a"/><path d="M28.7 262.4L26.4 267.6L28.2 268Z" fill="#7fb24a"/><path d="M28.7 262.4L31.6 257.2L32.8 258Z" fill="#5aa6a0"/>
<path d="M22.6 262.4H34.8M28.7 256.2V268.6" stroke="#c9ccd2" stroke-width="0.5"/></g>
<!-- window controls -->
<g fill="none" stroke="#2b2b2b" stroke-width="1"><path d="M373.2 261.8H382.2"/><rect x="416.3" y="258.2" width="8.4" height="8.4"/><path d="M459.6 257.7L468.6 266.7M468.6 257.7L459.6 266.7"/></g>
<!-- grip -->
<g stroke-dasharray="1 1.6" stroke-width="1.1" fill="none"><path d="M17.6 280V307" stroke="#a2a4a6"/><path d="M18.6 280.8V307.8" stroke="#f6f6f6"/></g>
<path d="M125.3 280V307M272.4 280V307" stroke="#d9dadb" stroke-width="1"/>
<g fill="#000">
<!-- home -->
<path d="M35.4 288.4L27.6 295.2L28.6 296.2L35.4 290.4L42.2 296.2L43.2 295.2L40.6 292.9V289.4H38.8V291.3Z"/><path d="M35.4 291.6L29.8 296.4V300.6H33.8V297H37V300.6H41V296.4Z"/>
<!-- left arrow -->
<path d="M62 293.4L69.4 286.2L71.6 288.4L68.2 291.8H76V295H68.2L71.6 298.4L69.4 300.6Z"/>
<!-- right arrow -->
<path d="M108.4 293.4L101 286.2L98.8 288.4L102.2 291.8H94.4V295H102.2L98.8 298.4L101 300.6Z"/>
<!-- move -->
<path d="M148.7 285.2L152 288.8H149.8V292.3H153.3V290.1L156.9 293.4L153.3 296.7V294.5H149.8V298H152L148.7 301.6L145.4 298H147.6V294.5H144.1V296.7L140.5 293.4L144.1 290.1V292.3H147.6V288.8H145.4Z"/>
<!-- save -->
<path d="M288.7 287.6Q288.7 286.5 289.8 286.5H298.6L302.5 290.4V299Q302.5 300.1 301.4 300.1H289.8Q288.7 300.1 288.7 299Z" fill="none" stroke="#000" stroke-width="1.4"/><path d="M291 286.6H297.9V291.7H291ZM294.5 287.6V290.6H296.3V287.6Z" fill-rule="evenodd"/><path d="M291.4 300V295.3H300.2V300" fill="none" stroke="#000" stroke-width="1.3"/>
</g>
<!-- magnifier -->
<circle cx="180.9" cy="291.9" r="5.2" fill="none" stroke="#000" stroke-width="2.3"/><path d="M184.8 295.8L188.6 299.6" stroke="#000" stroke-width="2.6" stroke-linecap="round"/>
<!-- sliders -->
<path d="M208.4 289.3H222M208.4 294.1H222M208.4 298.9H222" stroke="#000" stroke-width="1.2"/><g fill="#000"><rect x="210.9" y="287.4" width="3" height="3.8" rx="0.8"/><rect x="216.9" y="292.2" width="3" height="3.8" rx="0.8"/><rect x="212.1" y="297" width="3" height="3.8" rx="0.8"/></g>
<!-- chart -->
<path d="M239.8 286.8V299.8H256.8" fill="none" stroke="#000" stroke-width="1.2"/><path d="M242 296.6L246.2 292L248.6 294.6L253.6 289.4" fill="none" stroke="#000" stroke-width="2.1"/><path d="M250.8 287.6H255.6V292.4Z" fill="#000"/>
</g>
<g transform="translate(475 0)">
<!-- mpl logo -->
<g opacity="0.75"><circle cx="28.7" cy="262.4" r="6.3" fill="#fff" stroke="#b9bcc2" stroke-width="0.9"/>
<path d="M28.7 262.4L24.6 257.6L27.2 256.4Z" fill="#f0a12c"/><path d="M28.7 262.4L23 261L23.4 263.8Z" fill="#e8c53a"/><path d="M28.7 262.4L33.6 267L31.6 268Z" fill="#e2672a"/><path d="M28.7 262.4L26.4 267.6L28.2 268Z" fill="#7fb24a"/><path d="M28.7 262.4L31.6 257.2L32.8 258Z" fill="#5aa6a0"/>
<path d="M22.6 262.4H34.8M28.7 256.2V268.6" stroke="#c9ccd2" stroke-width="0.5"/></g>
<!-- window controls -->
<g fill="none" stroke="#a9a9a9" stroke-width="1"><path d="M373.2 261.8H382.2"/><rect x="416.3" y="258.2" width="8.4" height="8.4"/><path d="M459.6 257.7L468.6 266.7M468.6 257.7L459.6 266.7"/></g>
<!-- grip -->
<g stroke-dasharray="1 1.6" stroke-width="1.1" fill="none"><path d="M17.6 280V307" stroke="#a2a4a6"/><path d="M18.6 280.8V307.8" stroke="#f6f6f6"/></g>
<path d="M125.3 280V307M272.4 280V307" stroke="#d9dadb" stroke-width="1"/>
<g fill="#000">
<!-- home -->
<path d="M35.4 288.4L27.6 295.2L28.6 296.2L35.4 290.4L42.2 296.2L43.2 295.2L40.6 292.9V289.4H38.8V291.3Z"/><path d="M35.4 291.6L29.8 296.4V300.6H33.8V297H37V300.6H41V296.4Z"/>
<!-- left arrow -->
<path d="M62 293.4L69.4 286.2L71.6 288.4L68.2 291.8H76V295H68.2L71.6 298.4L69.4 300.6Z"/>
<!-- right arrow -->
<path d="M108.4 293.4L101 286.2L98.8 288.4L102.2 291.8H94.4V295H102.2L98.8 298.4L101 300.6Z"/>
<!-- move -->
<path d="M148.7 285.2L152 288.8H149.8V292.3H153.3V290.1L156.9 293.4L153.3 296.7V294.5H149.8V298H152L148.7 301.6L145.4 298H147.6V294.5H144.1V296.7L140.5 293.4L144.1 290.1V292.3H147.6V288.8H145.4Z"/>
<!-- save -->
<path d="M288.7 287.6Q288.7 286.5 289.8 286.5H298.6L302.5 290.4V299Q302.5 300.1 301.4 300.1H289.8Q288.7 300.1 288.7 299Z" fill="none" stroke="#000" stroke-width="1.4"/><path d="M291 286.6H297.9V291.7H291ZM294.5 287.6V290.6H296.3V287.6Z" fill-rule="evenodd"/><path d="M291.4 300V295.3H300.2V300" fill="none" stroke="#000" stroke-width="1.3"/>
</g>
<!-- magnifier -->
<circle cx="180.9" cy="291.9" r="5.2" fill="none" stroke="#000" stroke-width="2.3"/><path d="M184.8 295.8L188.6 299.6" stroke="#000" stroke-width="2.6" stroke-linecap="round"/>
<!-- sliders -->
<path d="M208.4 289.3H222M208.4 294.1H222M208.4 298.9H222" stroke="#000" stroke-width="1.2"/><g fill="#000"><rect x="210.9" y="287.4" width="3" height="3.8" rx="0.8"/><rect x="216.9" y="292.2" width="3" height="3.8" rx="0.8"/><rect x="212.1" y="297" width="3" height="3.8" rx="0.8"/></g>
<!-- chart -->
<path d="M239.8 286.8V299.8H256.8" fill="none" stroke="#000" stroke-width="1.2"/><path d="M242 296.6L246.2 292L248.6 294.6L253.6 289.4" fill="none" stroke="#000" stroke-width="2.1"/><path d="M250.8 287.6H255.6V292.4Z" fill="#000"/>
</g>
</svg>
<svg class="a" style="left:0;top:662px" width="1110" height="20" viewBox="0 662 1110 20"><g fill="#c9cbcc"><path d="M484 675h1.6v1.6h-1.6zM484 677.5h1.6v1.6h-1.6zM481.5 677.5h1.6v1.6h-1.6zM481.5 675h1.6v1.6h-1.6zM484 672.5h1.6v1.6h-1.6zM479 677.5h1.6v1.6h-1.6z"/><path d="M959 675h1.6v1.6h-1.6zM959 677.5h1.6v1.6h-1.6zM956.5 677.5h1.6v1.6h-1.6zM956.5 675h1.6v1.6h-1.6zM959 672.5h1.6v1.6h-1.6zM954 677.5h1.6v1.6h-1.6z"/></g></svg>
<!-- ===== plots ===== -->
<svg class="a" style="left:0;top:0" width="1110" height="737" viewBox="0 0 1110 737">
<g id="plot2">
  <rect x="74.5" y="353.5" width="365.5" height="270" fill="none" stroke="#1a1a1a" stroke-width="0.9"/><path d="M90.6 623.5v3.6" stroke="#1a1a1a" stroke-width="0.8"/><text x="90.6" y="637.6" font-size="10.2" text-anchor="middle" fill="#111">0</text><path d="M155.8 623.5v3.6" stroke="#1a1a1a" stroke-width="0.8"/><text x="155.8" y="637.6" font-size="10.2" text-anchor="middle" fill="#111">50</text><path d="M221.0 623.5v3.6" stroke="#1a1a1a" stroke-width="0.8"/><text x="221.0" y="637.6" font-size="10.2" text-anchor="middle" fill="#111">100</text><path d="M286.2 623.5v3.6" stroke="#1a1a1a" stroke-width="0.8"/><text x="286.2" y="637.6" font-size="10.2" text-anchor="middle" fill="#111">150</text><path d="M351.4 623.5v3.6" stroke="#1a1a1a" stroke-width="0.8"/><text x="351.4" y="637.6" font-size="10.2" text-anchor="middle" fill="#111">200</text><path d="M416.6 623.5v3.6" stroke="#1a1a1a" stroke-width="0.8"/><text x="416.6" y="637.6" font-size="10.2" text-anchor="middle" fill="#111">250</text><path d="M74.5 372.2h-3.8" stroke="#1a1a1a" stroke-width="0.8"/><text x="67.3" y="376.0" font-size="10.2" text-anchor="end" fill="#111">9.5</text><path d="M74.5 404.2h-3.8" stroke="#1a1a1a" stroke-width="0.8"/><text x="67.3" y="408.0" font-size="10.2" text-anchor="end" fill="#111">9.0</text><path d="M74.5 436.3h-3.8" stroke="#1a1a1a" stroke-width="0.8"/><text x="67.3" y="440.1" font-size="10.2" text-anchor="end" fill="#111">8.5</text><path d="M74.5 468.3h-3.8" stroke="#1a1a1a" stroke-width="0.8"/><text x="67.3" y="472.1" font-size="10.2" text-anchor="end" fill="#111">8.0</text><path d="M74.5 500.4h-3.8" stroke="#1a1a1a" stroke-width="0.8"/><text x="67.3" y="504.2" font-size="10.2" text-anchor="end" fill="#111">7.5</text><path d="M74.5 532.4h-3.8" stroke="#1a1a1a" stroke-width="0.8"/><text x="67.3" y="536.2" font-size="10.2" text-anchor="end" fill="#111">7.0</text><path d="M74.5 564.5h-3.8" stroke="#1a1a1a" stroke-width="0.8"/><text x="67.3" y="568.3" font-size="10.2" text-anchor="end" fill="#111">6.5</text><path d="M74.5 596.5h-3.8" stroke="#1a1a1a" stroke-width="0.8"/><text x="67.3" y="600.3" font-size="10.2" text-anchor="end" fill="#111">6.0</text><text x="257.2" y="348" font-size="12.3" text-anchor="middle" fill="#111">Maximum entropy thresholding</text><text x="257.2" y="652.3" font-size="10.2" text-anchor="middle" fill="#111">Threshold</text><text transform="translate(44.5,488.5) rotate(-90)" font-size="10.2" text-anchor="middle" fill="#111">Entropy</text><text x="238.3" y="506.4" font-size="11.2" fill="#111">Threshold = 121</text><text x="238.3" y="518.8" font-size="11.2" fill="#111">Entropy = 9.5976</text><path d="M277.7 493.5Q240 425 248.1 368.4" fill="none" stroke="#1a1a1a" stroke-width="1"/><path d="M244.9 373.59999999999997L248.1 368.4L250.7 374.0" fill="none" stroke="#1a1a1a" stroke-width="1"/>
  <g stroke="#1f77b4" stroke-width="1.3" fill="none" opacity="0.92" class="mk"><path d="M97.8 548.7h9.8"/><path class="v" d="M101.2 545.9v5.6M104.2 545.9v5.6"/><rect class="f" x="100.4" y="546.5" width="4.6" height="4.4"/><path d="M103.1 523.6h9.8"/><path class="v" d="M106.5 520.8v5.6M109.5 520.8v5.6"/><rect class="f" x="105.7" y="521.4" width="4.6" height="4.4"/><path d="M108.4 498.6h9.8"/><path class="v" d="M111.8 495.8v5.6M114.8 495.8v5.6"/><rect class="f" x="111.0" y="496.4" width="4.6" height="4.4"/><path d="M113.7 481.8h9.8"/><path class="v" d="M117.1 479.0v5.6M120.1 479.0v5.6"/><rect class="f" x="116.3" y="479.6" width="4.6" height="4.4"/><path d="M118.7 470.8h9.8"/><path class="v" d="M122.1 468.0v5.6M125.1 468.0v5.6"/><rect class="f" x="121.3" y="468.6" width="4.6" height="4.4"/><path d="M124.0 456.0h9.8"/><path class="v" d="M127.4 453.2v5.6M130.4 453.2v5.6"/><rect class="f" x="126.6" y="453.8" width="4.6" height="4.4"/><path d="M129.3 443.1h9.8"/><path class="v" d="M132.7 440.3v5.6M135.7 440.3v5.6"/><rect class="f" x="131.9" y="440.9" width="4.6" height="4.4"/><path d="M134.6 434.0h9.8"/><path class="v" d="M138.0 431.2v5.6M141.0 431.2v5.6"/><rect class="f" x="137.2" y="431.8" width="4.6" height="4.4"/><path d="M140.7 424.8h9.8"/><path class="v" d="M144.1 422.0v5.6M147.1 422.0v5.6"/><rect class="f" x="143.3" y="422.6" width="4.6" height="4.4"/><path d="M146.0 417.6h9.8"/><path class="v" d="M149.4 414.8v5.6M152.4 414.8v5.6"/><rect class="f" x="148.6" y="415.4" width="4.6" height="4.4"/><path d="M151.3 410.8h9.8"/><path class="v" d="M154.7 408.0v5.6M157.7 408.0v5.6"/><rect class="f" x="153.9" y="408.6" width="4.6" height="4.4"/><path d="M156.3 405.9h9.8"/><path class="v" d="M159.7 403.1v5.6M162.7 403.1v5.6"/><rect class="f" x="158.9" y="403.7" width="4.6" height="4.4"/><path d="M161.6 400.5h9.8"/><path class="v" d="M165.0 397.7v5.6M168.0 397.7v5.6"/><rect class="f" x="164.2" y="398.3" width="4.6" height="4.4"/><path d="M166.5 396.4h9.8"/><path class="v" d="M169.9 393.6v5.6M172.9 393.6v5.6"/><rect class="f" x="169.1" y="394.2" width="4.6" height="4.4"/><path d="M171.9 392.2h9.8"/><path class="v" d="M175.3 389.4v5.6M178.3 389.4v5.6"/><rect class="f" x="174.5" y="390.0" width="4.6" height="4.4"/><path d="M177.2 388.4h9.8"/><path class="v" d="M180.6 385.6v5.6M183.6 385.6v5.6"/><rect class="f" x="179.8" y="386.2" width="4.6" height="4.4"/><path d="M182.5 385.0h9.8"/><path class="v" d="M185.9 382.2v5.6M188.9 382.2v5.6"/><rect class="f" x="185.1" y="382.8" width="4.6" height="4.4"/><path d="M187.8 381.9h9.8"/><path class="v" d="M191.2 379.1v5.6M194.2 379.1v5.6"/><rect class="f" x="190.4" y="379.7" width="4.6" height="4.4"/><path d="M193.1 379.3h9.8"/><path class="v" d="M196.5 376.5v5.6M199.5 376.5v5.6"/><rect class="f" x="195.7" y="377.1" width="4.6" height="4.4"/><path d="M198.5 376.6h9.8"/><path class="v" d="M201.9 373.8v5.6M204.9 373.8v5.6"/><rect class="f" x="201.1" y="374.4" width="4.6" height="4.4"/><path d="M203.8 374.3h9.8"/><path class="v" d="M207.2 371.5v5.6M210.2 371.5v5.6"/><rect class="f" x="206.4" y="372.1" width="4.6" height="4.4"/><path d="M209.1 372.4h9.8"/><path class="v" d="M212.5 369.6v5.6M215.5 369.6v5.6"/><rect class="f" x="211.7" y="370.2" width="4.6" height="4.4"/><path d="M214.4 370.9h9.8"/><path class="v" d="M217.8 368.1v5.6M220.8 368.1v5.6"/><rect class="f" x="217.0" y="368.7" width="4.6" height="4.4"/><path d="M219.7 369.4h9.8"/><path class="v" d="M223.1 366.6v5.6M226.1 366.6v5.6"/><rect class="f" x="222.3" y="367.2" width="4.6" height="4.4"/><path d="M225.1 368.2h9.8"/><path class="v" d="M228.5 365.4v5.6M231.5 365.4v5.6"/><rect class="f" x="227.7" y="366.0" width="4.6" height="4.4"/><path d="M230.4 367.1h9.8"/><path class="v" d="M233.8 364.3v5.6M236.8 364.3v5.6"/><rect class="f" x="233.0" y="364.9" width="4.6" height="4.4"/><path d="M235.7 366.3h9.8"/><path class="v" d="M239.1 363.5v5.6M242.1 363.5v5.6"/><rect class="f" x="238.3" y="364.1" width="4.6" height="4.4"/><path d="M242.5 366.0h9.8"/><path class="v" d="M245.9 363.2v5.6M248.9 363.2v5.6"/><rect class="f" x="245.1" y="363.8" width="4.6" height="4.4"/><path d="M249.1 366.0h9.8"/><path class="v" d="M252.5 363.2v5.6M255.5 363.2v5.6"/><rect class="f" x="251.7" y="363.8" width="4.6" height="4.4"/><path d="M255.7 366.0h9.8"/><path class="v" d="M259.1 363.2v5.6M262.1 363.2v5.6"/><rect class="f" x="258.3" y="363.8" width="4.6" height="4.4"/><path d="M261.1 366.3h9.8"/><path class="v" d="M264.5 363.5v5.6M267.5 363.5v5.6"/><rect class="f" x="263.7" y="364.1" width="4.6" height="4.4"/><path d="M266.4 366.7h9.8"/><path class="v" d="M269.8 363.9v5.6M272.8 363.9v5.6"/><rect class="f" x="269.0" y="364.5" width="4.6" height="4.4"/><path d="M271.7 367.5h9.8"/><path class="v" d="M275.1 364.7v5.6M278.1 364.7v5.6"/><rect class="f" x="274.3" y="365.3" width="4.6" height="4.4"/><path d="M277.0 368.2h9.8"/><path class="v" d="M280.4 365.4v5.6M283.4 365.4v5.6"/><rect class="f" x="279.6" y="366.0" width="4.6" height="4.4"/><path d="M282.3 369.4h9.8"/><path class="v" d="M285.7 366.6v5.6M288.7 366.6v5.6"/><rect class="f" x="284.9" y="367.2" width="4.6" height="4.4"/><path d="M287.7 370.5h9.8"/><path class="v" d="M291.1 367.7v5.6M294.1 367.7v5.6"/><rect class="f" x="290.3" y="368.3" width="4.6" height="4.4"/><path d="M293.0 372.4h9.8"/><path class="v" d="M296.4 369.6v5.6M299.4 369.6v5.6"/><rect class="f" x="295.6" y="370.2" width="4.6" height="4.4"/><path d="M298.3 374.3h9.8"/><path class="v" d="M301.7 371.5v5.6M304.7 371.5v5.6"/><rect class="f" x="300.9" y="372.1" width="4.6" height="4.4"/><path d="M303.6 376.6h9.8"/><path class="v" d="M307.0 373.8v5.6M310.0 373.8v5.6"/><rect class="f" x="306.2" y="374.4" width="4.6" height="4.4"/><path d="M308.9 379.3h9.8"/><path class="v" d="M312.3 376.5v5.6M315.3 376.5v5.6"/><rect class="f" x="311.5" y="377.1" width="4.6" height="4.4"/><path d="M314.2 382.3h9.8"/><path class="v" d="M317.6 379.5v5.6M320.6 379.5v5.6"/><rect class="f" x="316.8" y="380.1" width="4.6" height="4.4"/><path d="M319.6 385.7h9.8"/><path class="v" d="M323.0 382.9v5.6M326.0 382.9v5.6"/><rect class="f" x="322.2" y="383.5" width="4.6" height="4.4"/><path d="M324.9 389.5h9.8"/><path class="v" d="M328.3 386.7v5.6M331.3 386.7v5.6"/><rect class="f" x="327.5" y="387.3" width="4.6" height="4.4"/><path d="M330.2 393.7h9.8"/><path class="v" d="M333.6 390.9v5.6M336.6 390.9v5.6"/><rect class="f" x="332.8" y="391.5" width="4.6" height="4.4"/><path d="M335.5 398.6h9.8"/><path class="v" d="M338.9 395.8v5.6M341.9 395.8v5.6"/><rect class="f" x="338.1" y="396.4" width="4.6" height="4.4"/><path d="M340.8 403.6h9.8"/><path class="v" d="M344.2 400.8v5.6M347.2 400.8v5.6"/><rect class="f" x="343.4" y="401.4" width="4.6" height="4.4"/><path d="M346.1 408.9h9.8"/><path class="v" d="M349.5 406.1v5.6M352.5 406.1v5.6"/><rect class="f" x="348.7" y="406.7" width="4.6" height="4.4"/><path d="M351.9 413.8h9.8"/><path class="v" d="M355.3 411.0v5.6M358.3 411.0v5.6"/><rect class="f" x="354.5" y="411.6" width="4.6" height="4.4"/><path d="M356.8 418.0h9.8"/><path class="v" d="M360.2 415.2v5.6M363.2 415.2v5.6"/><rect class="f" x="359.4" y="415.8" width="4.6" height="4.4"/><path d="M362.5 425.6h9.8"/><path class="v" d="M365.9 422.8v5.6M368.9 422.8v5.6"/><rect class="f" x="365.1" y="423.4" width="4.6" height="4.4"/><path d="M368.6 435.1h9.8"/><path class="v" d="M372.0 432.3v5.6M375.0 432.3v5.6"/><rect class="f" x="371.2" y="432.9" width="4.6" height="4.4"/><path d="M373.5 441.2h9.8"/><path class="v" d="M376.9 438.4v5.6M379.9 438.4v5.6"/><rect class="f" x="376.1" y="439.0" width="4.6" height="4.4"/><path d="M378.8 453.0h9.8"/><path class="v" d="M382.2 450.2v5.6M385.2 450.2v5.6"/><rect class="f" x="381.4" y="450.8" width="4.6" height="4.4"/><path d="M384.2 461.7h9.8"/><path class="v" d="M387.6 458.9v5.6M390.6 458.9v5.6"/><rect class="f" x="386.8" y="459.5" width="4.6" height="4.4"/><path d="M389.5 470.8h9.8"/><path class="v" d="M392.9 468.0v5.6M395.9 468.0v5.6"/><rect class="f" x="392.1" y="468.6" width="4.6" height="4.4"/><path d="M394.4 491.3h9.8"/><path class="v" d="M397.8 488.5v5.6M400.8 488.5v5.6"/><rect class="f" x="397.0" y="489.1" width="4.6" height="4.4"/><path d="M399.7 517.6h9.8"/><path class="v" d="M403.1 514.8v5.6M406.1 514.8v5.6"/><rect class="f" x="402.3" y="515.4" width="4.6" height="4.4"/><path d="M405.1 549.1h9.8"/><path class="v" d="M408.5 546.3v5.6M411.5 546.3v5.6"/><rect class="f" x="407.7" y="546.9" width="4.6" height="4.4"/><path d="M87.9 609.9h9.8"/><path class="v" d="M91.3 607.1v5.6M94.3 607.1v5.6"/><rect class="f" x="90.5" y="607.7" width="4.6" height="4.4"/><path d="M92.5 611.0h9.8"/><path class="v" d="M95.9 608.2v5.6M98.9 608.2v5.6"/><rect class="f" x="95.1" y="608.8" width="4.6" height="4.4"/><path d="M410.4 610.6h9.8"/><path class="v" d="M413.8 607.8v5.6M416.8 607.8v5.6"/><rect class="f" x="413.0" y="608.4" width="4.6" height="4.4"/><path d="M414.9 609.9h9.8"/><path class="v" d="M418.3 607.1v5.6M421.3 607.1v5.6"/><rect class="f" x="417.5" y="607.7" width="4.6" height="4.4"/></g>
</g>
<g id="plot1">
  <rect x="549.5" y="353.5" width="365.5" height="270" fill="none" stroke="#1a1a1a" stroke-width="0.9"/><path d="M565.6 623.5v3.6" stroke="#1a1a1a" stroke-width="0.8"/><text x="565.6" y="637.6" font-size="10.2" text-anchor="middle" fill="#111">0</text><path d="M630.8 623.5v3.6" stroke="#1a1a1a" stroke-width="0.8"/><text x="630.8" y="637.6" font-size="10.2" text-anchor="middle" fill="#111">50</text><path d="M696.0 623.5v3.6" stroke="#1a1a1a" stroke-width="0.8"/><text x="696.0" y="637.6" font-size="10.2" text-anchor="middle" fill="#111">100</text><path d="M761.2 623.5v3.6" stroke="#1a1a1a" stroke-width="0.8"/><text x="761.2" y="637.6" font-size="10.2" text-anchor="middle" fill="#111">150</text><path d="M826.4 623.5v3.6" stroke="#1a1a1a" stroke-width="0.8"/><text x="826.4" y="637.6" font-size="10.2" text-anchor="middle" fill="#111">200</text><path d="M891.6 623.5v3.6" stroke="#1a1a1a" stroke-width="0.8"/><text x="891.6" y="637.6" font-size="10.2" text-anchor="middle" fill="#111">250</text><path d="M549.5 361.4h-3.8" stroke="#1a1a1a" stroke-width="0.8"/><text x="542.3" y="365.2" font-size="10.2" text-anchor="end" fill="#111">0.175</text><path d="M549.5 397.1h-3.8" stroke="#1a1a1a" stroke-width="0.8"/><text x="542.3" y="400.9" font-size="10.2" text-anchor="end" fill="#111">0.150</text><path d="M549.5 432.8h-3.8" stroke="#1a1a1a" stroke-width="0.8"/><text x="542.3" y="436.6" font-size="10.2" text-anchor="end" fill="#111">0.125</text><path d="M549.5 468.5h-3.8" stroke="#1a1a1a" stroke-width="0.8"/><text x="542.3" y="472.3" font-size="10.2" text-anchor="end" fill="#111">0.100</text><path d="M549.5 504.2h-3.8" stroke="#1a1a1a" stroke-width="0.8"/><text x="542.3" y="508.0" font-size="10.2" text-anchor="end" fill="#111">0.075</text><path d="M549.5 539.9h-3.8" stroke="#1a1a1a" stroke-width="0.8"/><text x="542.3" y="543.7" font-size="10.2" text-anchor="end" fill="#111">0.050</text><path d="M549.5 575.6h-3.8" stroke="#1a1a1a" stroke-width="0.8"/><text x="542.3" y="579.4" font-size="10.2" text-anchor="end" fill="#111">0.025</text><path d="M549.5 611.3h-3.8" stroke="#1a1a1a" stroke-width="0.8"/><text x="542.3" y="615.1" font-size="10.2" text-anchor="end" fill="#111">0.000</text><text x="732.2" y="348" font-size="12.3" text-anchor="middle" fill="#111">Maximum MI thresholding</text><text x="732.2" y="652.3" font-size="10.2" text-anchor="middle" fill="#111">Threshold</text><text transform="translate(505.5,488.5) rotate(-90)" font-size="10.2" text-anchor="middle" fill="#111">Mutual info</text><text x="702.7" y="506.4" font-size="11.2" fill="#111">Threshold = 113</text><text x="702.7" y="518.8" font-size="11.2" fill="#111">Mutual Info = 0.1726</text><path d="M749.7 493.5Q706 425 712.8 368.4" fill="none" stroke="#1a1a1a" stroke-width="1"/><path d="M709.5999999999999 373.59999999999997L712.8 368.4L715.4 374.0" fill="none" stroke="#1a1a1a" stroke-width="1"/>
  <g stroke="#1f77b4" stroke-width="1.3" fill="none" opacity="0.92" class="mk"><path d="M562.9 611.0h9.8"/><path class="v" d="M566.3 608.2v5.6M569.3 608.2v5.6"/><rect class="f" x="565.5" y="608.8" width="4.6" height="4.4"/><path d="M567.8 569.6h9.8"/><path class="v" d="M571.2 566.8v5.6M574.2 566.8v5.6"/><rect class="f" x="570.4" y="567.4" width="4.6" height="4.4"/><path d="M573.2 536.2h9.8"/><path class="v" d="M576.6 533.4v5.6M579.6 533.4v5.6"/><rect class="f" x="575.8" y="534.0" width="4.6" height="4.4"/><path d="M578.1 527.8h9.8"/><path class="v" d="M581.5 525.0v5.6M584.5 525.0v5.6"/><rect class="f" x="580.7" y="525.6" width="4.6" height="4.4"/><path d="M583.4 516.0h9.8"/><path class="v" d="M586.8 513.2v5.6M589.8 513.2v5.6"/><rect class="f" x="586.0" y="513.8" width="4.6" height="4.4"/><path d="M588.7 508.4h9.8"/><path class="v" d="M592.1 505.6v5.6M595.1 505.6v5.6"/><rect class="f" x="591.3" y="506.2" width="4.6" height="4.4"/><path d="M593.7 504.3h9.8"/><path class="v" d="M597.1 501.5v5.6M600.1 501.5v5.6"/><rect class="f" x="596.3" y="502.1" width="4.6" height="4.4"/><path d="M599.0 495.5h9.8"/><path class="v" d="M602.4 492.7v5.6M605.4 492.7v5.6"/><rect class="f" x="601.6" y="493.3" width="4.6" height="4.4"/><path d="M604.3 483.7h9.8"/><path class="v" d="M607.7 480.9v5.6M610.7 480.9v5.6"/><rect class="f" x="606.9" y="481.5" width="4.6" height="4.4"/><path d="M609.6 478.0h9.8"/><path class="v" d="M613.0 475.2v5.6M616.0 475.2v5.6"/><rect class="f" x="612.2" y="475.8" width="4.6" height="4.4"/><path d="M615.7 463.6h9.8"/><path class="v" d="M619.1 460.8v5.6M622.1 460.8v5.6"/><rect class="f" x="618.3" y="461.4" width="4.6" height="4.4"/><path d="M621.4 449.5h9.8"/><path class="v" d="M624.8 446.7v5.6M627.8 446.7v5.6"/><rect class="f" x="624.0" y="447.3" width="4.6" height="4.4"/><path d="M626.7 441.2h9.8"/><path class="v" d="M630.1 438.4v5.6M633.1 438.4v5.6"/><rect class="f" x="629.3" y="439.0" width="4.6" height="4.4"/><path d="M632.0 426.4h9.8"/><path class="v" d="M635.4 423.6v5.6M638.4 423.6v5.6"/><rect class="f" x="634.6" y="424.2" width="4.6" height="4.4"/><path d="M637.4 419.1h9.8"/><path class="v" d="M640.8 416.3v5.6M643.8 416.3v5.6"/><rect class="f" x="640.0" y="416.9" width="4.6" height="4.4"/><path d="M642.3 412.3h9.8"/><path class="v" d="M645.7 409.5v5.6M648.7 409.5v5.6"/><rect class="f" x="644.9" y="410.1" width="4.6" height="4.4"/><path d="M647.6 400.5h9.8"/><path class="v" d="M651.0 397.7v5.6M654.0 397.7v5.6"/><rect class="f" x="650.2" y="398.3" width="4.6" height="4.4"/><path d="M652.9 391.0h9.8"/><path class="v" d="M656.3 388.2v5.6M659.3 388.2v5.6"/><rect class="f" x="655.5" y="388.8" width="4.6" height="4.4"/><path d="M657.9 387.2h9.8"/><path class="v" d="M661.3 384.4v5.6M664.3 384.4v5.6"/><rect class="f" x="660.5" y="385.0" width="4.6" height="4.4"/><path d="M663.2 380.4h9.8"/><path class="v" d="M666.6 377.6v5.6M669.6 377.6v5.6"/><rect class="f" x="665.8" y="378.2" width="4.6" height="4.4"/><path d="M668.5 375.8h9.8"/><path class="v" d="M671.9 373.0v5.6M674.9 373.0v5.6"/><rect class="f" x="671.1" y="373.6" width="4.6" height="4.4"/><path d="M673.8 373.6h9.8"/><path class="v" d="M677.2 370.8v5.6M680.2 370.8v5.6"/><rect class="f" x="676.4" y="371.4" width="4.6" height="4.4"/><path d="M679.2 371.7h9.8"/><path class="v" d="M682.6 368.9v5.6M685.6 368.9v5.6"/><rect class="f" x="681.8" y="369.5" width="4.6" height="4.4"/><path d="M684.5 369.8h9.8"/><path class="v" d="M687.9 367.0v5.6M690.9 367.0v5.6"/><rect class="f" x="687.1" y="367.6" width="4.6" height="4.4"/><path d="M689.8 368.2h9.8"/><path class="v" d="M693.2 365.4v5.6M696.2 365.4v5.6"/><rect class="f" x="692.4" y="366.0" width="4.6" height="4.4"/><path d="M695.1 367.1h9.8"/><path class="v" d="M698.5 364.3v5.6M701.5 364.3v5.6"/><rect class="f" x="697.7" y="364.9" width="4.6" height="4.4"/><path d="M700.4 366.3h9.8"/><path class="v" d="M703.8 363.5v5.6M706.8 363.5v5.6"/><rect class="f" x="703.0" y="364.1" width="4.6" height="4.4"/><path d="M707.7 366.0h9.8"/><path class="v" d="M711.1 363.2v5.6M714.1 363.2v5.6"/><rect class="f" x="710.3" y="363.8" width="4.6" height="4.4"/><path d="M713.9 366.1h9.8"/><path class="v" d="M717.3 363.3v5.6M720.3 363.3v5.6"/><rect class="f" x="716.5" y="363.9" width="4.6" height="4.4"/><path d="M720.1 366.3h9.8"/><path class="v" d="M723.5 363.5v5.6M726.5 363.5v5.6"/><rect class="f" x="722.7" y="364.1" width="4.6" height="4.4"/><path d="M726.2 366.7h9.8"/><path class="v" d="M729.6 363.9v5.6M732.6 363.9v5.6"/><rect class="f" x="728.8" y="364.5" width="4.6" height="4.4"/><path d="M731.5 367.5h9.8"/><path class="v" d="M734.9 364.7v5.6M737.9 364.7v5.6"/><rect class="f" x="734.1" y="365.3" width="4.6" height="4.4"/><path d="M736.8 368.6h9.8"/><path class="v" d="M740.2 365.8v5.6M743.2 365.8v5.6"/><rect class="f" x="739.4" y="366.4" width="4.6" height="4.4"/><path d="M742.1 370.1h9.8"/><path class="v" d="M745.5 367.3v5.6M748.5 367.3v5.6"/><rect class="f" x="744.7" y="367.9" width="4.6" height="4.4"/><path d="M747.5 371.7h9.8"/><path class="v" d="M750.9 368.9v5.6M753.9 368.9v5.6"/><rect class="f" x="750.1" y="369.5" width="4.6" height="4.4"/><path d="M752.8 373.2h9.8"/><path class="v" d="M756.2 370.4v5.6M759.2 370.4v5.6"/><rect class="f" x="755.4" y="371.0" width="4.6" height="4.4"/><path d="M758.1 374.7h9.8"/><path class="v" d="M761.5 371.9v5.6M764.5 371.9v5.6"/><rect class="f" x="760.7" y="372.5" width="4.6" height="4.4"/><path d="M763.4 376.6h9.8"/><path class="v" d="M766.8 373.8v5.6M769.8 373.8v5.6"/><rect class="f" x="766.0" y="374.4" width="4.6" height="4.4"/><path d="M768.7 379.3h9.8"/><path class="v" d="M772.1 376.5v5.6M775.1 376.5v5.6"/><rect class="f" x="771.3" y="377.1" width="4.6" height="4.4"/><path d="M774.1 381.5h9.8"/><path class="v" d="M777.5 378.7v5.6M780.5 378.7v5.6"/><rect class="f" x="776.7" y="379.3" width="4.6" height="4.4"/><path d="M779.4 385.7h9.8"/><path class="v" d="M782.8 382.9v5.6M785.8 382.9v5.6"/><rect class="f" x="782.0" y="383.5" width="4.6" height="4.4"/><path d="M784.7 389.9h9.8"/><path class="v" d="M788.1 387.1v5.6M791.1 387.1v5.6"/><rect class="f" x="787.3" y="387.7" width="4.6" height="4.4"/><path d="M790.0 393.3h9.8"/><path class="v" d="M793.4 390.5v5.6M796.4 390.5v5.6"/><rect class="f" x="792.6" y="391.1" width="4.6" height="4.4"/><path d="M795.3 400.5h9.8"/><path class="v" d="M798.7 397.7v5.6M801.7 397.7v5.6"/><rect class="f" x="797.9" y="398.3" width="4.6" height="4.4"/><path d="M800.3 409.3h9.8"/><path class="v" d="M803.7 406.5v5.6M806.7 406.5v5.6"/><rect class="f" x="802.9" y="407.1" width="4.6" height="4.4"/><path d="M805.6 415.4h9.8"/><path class="v" d="M809.0 412.6v5.6M812.0 412.6v5.6"/><rect class="f" x="808.2" y="413.2" width="4.6" height="4.4"/><path d="M810.9 420.7h9.8"/><path class="v" d="M814.3 417.9v5.6M817.3 417.9v5.6"/><rect class="f" x="813.5" y="418.5" width="4.6" height="4.4"/><path d="M816.2 434.3h9.8"/><path class="v" d="M819.6 431.5v5.6M822.6 431.5v5.6"/><rect class="f" x="818.8" y="432.1" width="4.6" height="4.4"/><path d="M821.2 442.3h9.8"/><path class="v" d="M824.6 439.5v5.6M827.6 439.5v5.6"/><rect class="f" x="823.8" y="440.1" width="4.6" height="4.4"/><path d="M826.5 459.4h9.8"/><path class="v" d="M829.9 456.6v5.6M832.9 456.6v5.6"/><rect class="f" x="829.1" y="457.2" width="4.6" height="4.4"/><path d="M832.2 478.8h9.8"/><path class="v" d="M835.6 476.0v5.6M838.6 476.0v5.6"/><rect class="f" x="834.8" y="476.6" width="4.6" height="4.4"/><path d="M837.9 488.3h9.8"/><path class="v" d="M841.3 485.5v5.6M844.3 485.5v5.6"/><rect class="f" x="840.5" y="486.1" width="4.6" height="4.4"/><path d="M843.6 498.6h9.8"/><path class="v" d="M847.0 495.8v5.6M850.0 495.8v5.6"/><rect class="f" x="846.2" y="496.4" width="4.6" height="4.4"/><path d="M848.9 518.3h9.8"/><path class="v" d="M852.3 515.5v5.6M855.3 515.5v5.6"/><rect class="f" x="851.5" y="516.1" width="4.6" height="4.4"/><path d="M853.8 527.8h9.8"/><path class="v" d="M857.2 525.0v5.6M860.2 525.0v5.6"/><rect class="f" x="856.4" y="525.6" width="4.6" height="4.4"/><path d="M859.5 547.2h9.8"/><path class="v" d="M862.9 544.4v5.6M865.9 544.4v5.6"/><rect class="f" x="862.1" y="545.0" width="4.6" height="4.4"/><path d="M864.5 563.9h9.8"/><path class="v" d="M867.9 561.1v5.6M870.9 561.1v5.6"/><rect class="f" x="867.1" y="561.7" width="4.6" height="4.4"/><path d="M869.8 572.3h9.8"/><path class="v" d="M873.2 569.5v5.6M876.2 569.5v5.6"/><rect class="f" x="872.4" y="570.1" width="4.6" height="4.4"/><path d="M874.7 580.2h9.8"/><path class="v" d="M878.1 577.4v5.6M881.1 577.4v5.6"/><rect class="f" x="877.3" y="578.0" width="4.6" height="4.4"/><path d="M880.1 593.2h9.8"/><path class="v" d="M883.5 590.4v5.6M886.5 590.4v5.6"/><rect class="f" x="882.7" y="591.0" width="4.6" height="4.4"/><path d="M885.4 599.6h9.8"/><path class="v" d="M888.8 596.8v5.6M891.8 596.8v5.6"/><rect class="f" x="888.0" y="597.4" width="4.6" height="4.4"/><path d="M890.7 611.0h9.8"/><path class="v" d="M894.1 608.2v5.6M897.1 608.2v5.6"/><rect class="f" x="893.3" y="608.8" width="4.6" height="4.4"/></g>
</g>
</svg>
</body>
</html>
